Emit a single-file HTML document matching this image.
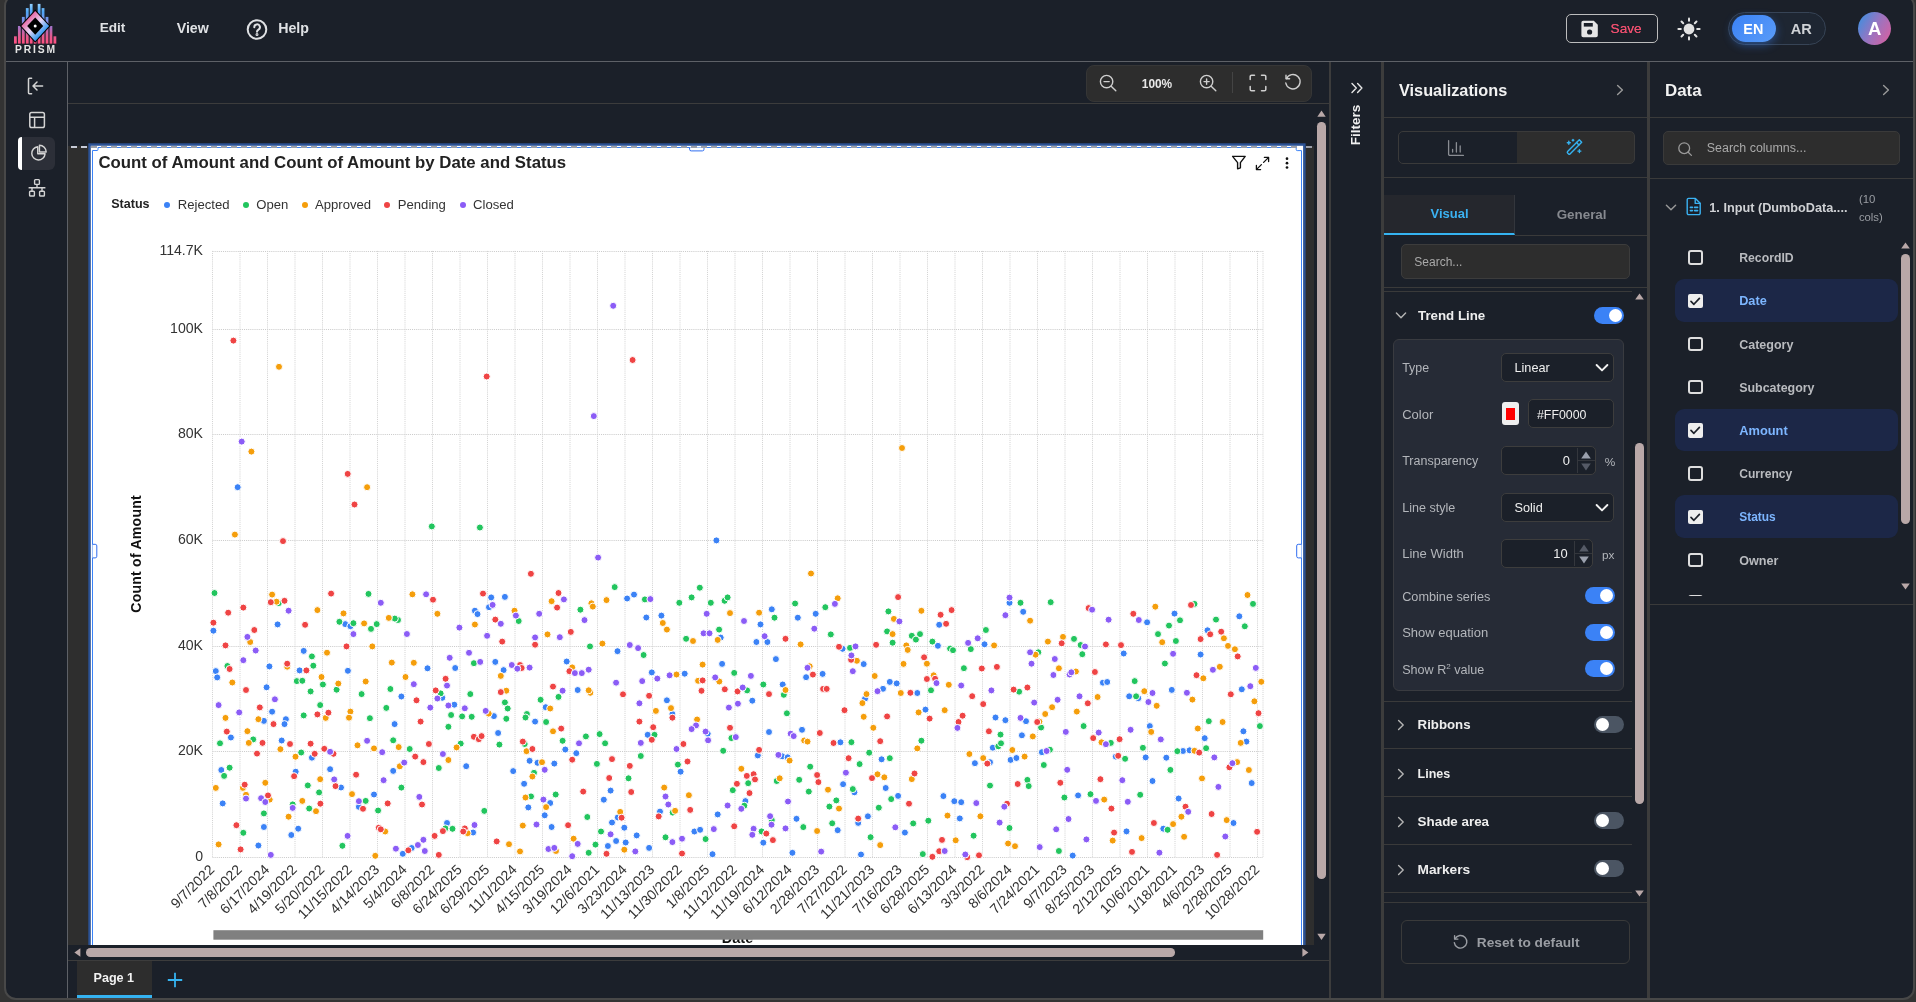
<!DOCTYPE html>
<html><head><meta charset="utf-8"><title>Prism</title>
<style>
html,body{margin:0;padding:0;overflow:hidden}
body{width:1916px;height:1002px;background:#333333;overflow:hidden;position:relative;font-family:"Liberation Sans",sans-serif;}
div{box-sizing:border-box}
svg{position:absolute;overflow:visible}
.tg{position:absolute;width:30px;height:17px;border-radius:9px}
.tg i{position:absolute;top:2px;width:13px;height:13px;border-radius:50%;background:#fff}
.on{background:#3b82f6} .on i{right:2px}
.off{background:#4b5563} .off i{left:2px}
.hl{position:absolute;height:1px;background:#3a3a3a}
.vl{position:absolute;width:3px;background:#3c3c3c}
.inp{position:absolute;background:#1b2029;border:1px solid #3d3d3d;border-radius:5px}
</style></head>
<body>
<div style="position:absolute;left:4px;top:-6px;width:1911px;height:1006px;border:2px solid #484848;border-radius:12px;background:#1b2029"></div>
<div style="position:absolute;left:0;top:0;width:1916px;height:1002px;overflow:hidden;will-change:transform">
<div style="position:absolute;left:6px;top:61px;width:1907px;height:1px;background:#5e6167"></div><svg style="left:0;top:0" width="70" height="60" viewBox="0 0 70 60">
<defs>
<linearGradient id="lgb" gradientUnits="userSpaceOnUse" x1="0" y1="3" x2="0" y2="44">
<stop offset="0" stop-color="#9ad4ff"/><stop offset="0.22" stop-color="#4ea6f6"/><stop offset="0.42" stop-color="#7b8fe6"/><stop offset="0.6" stop-color="#a871c2"/><stop offset="0.82" stop-color="#e65a8e"/><stop offset="1" stop-color="#ff4f7f"/>
</linearGradient>
<linearGradient id="lgd" gradientUnits="userSpaceOnUse" x1="28" y1="18.5" x2="42.5" y2="33">
<stop offset="0" stop-color="#e66aa6"/><stop offset="0.5" stop-color="#e6d6f6"/><stop offset="1" stop-color="#3a9bf2"/>
</linearGradient>
</defs>
<g fill="url(#lgb)"><rect x="14.00" y="36.3" width="2.8" height="7.3"/><rect x="17.95" y="26" width="2.8" height="17.6"/><rect x="21.90" y="16.9" width="2.8" height="26.7"/><rect x="25.85" y="8.1" width="2.8" height="35.5"/><rect x="29.80" y="3.9" width="2.8" height="39.7"/><rect x="33.75" y="14" width="2.8" height="29.6"/><rect x="37.70" y="3.9" width="2.8" height="39.7"/><rect x="41.65" y="8.1" width="2.8" height="35.5"/><rect x="45.60" y="16.9" width="2.8" height="26.7"/><rect x="49.55" y="26" width="2.8" height="17.6"/><rect x="53.50" y="36.3" width="2.8" height="7.3"/></g>
<path d="M35.2 9.50 L50.5 26.1 L35.2 42.70 L19.900000000000002 26.1 Z" fill="#000"/>
<path d="M35.2 11.02 L49.1 26.1 L35.2 41.18 L21.300000000000004 26.1 Z" fill="url(#lgd)"/>
<path d="M35.2 17.42 L43.2 26.1 L35.2 34.78 L27.200000000000003 26.1 Z" fill="#000"/>
<circle cx="35.2" cy="26.1" r="1.5" fill="#fff"/>
<text x="14.9" y="52.9" font-family="Liberation Sans" font-weight="bold" font-size="10.3" fill="#e4e4e4" textLength="40.3" lengthAdjust="spacing">PRISM</text>
</svg><div style="position:absolute;top:18.20px;line-height:20px;font-size:13.6px;color:#dfe1e4;white-space:nowrap;font-weight:bold;left:99.70px;">Edit</div><div style="position:absolute;top:18.20px;line-height:20px;font-size:14.2px;color:#dfe1e4;white-space:nowrap;font-weight:bold;left:176.70px;">View</div><svg style="left:245px;top:17.6px" width="24" height="24" viewBox="0 0 24 24" fill="none" stroke="#dfe1e4" stroke-width="2" stroke-linecap="round" stroke-linejoin="round">
<circle cx="12" cy="11.5" r="9.3"/><path d="M9.3 9.2a2.8 2.8 0 1 1 4.2 2.4c-.9.55-1.5 1.1-1.5 2.2"/><circle cx="12" cy="16.6" r="0.5" fill="#dfe1e4"/></svg><div style="position:absolute;top:18.20px;line-height:20px;font-size:14.2px;color:#dfe1e4;white-space:nowrap;font-weight:bold;left:278.20px;">Help</div><div style="position:absolute;left:1566px;top:14px;width:92px;height:29px;box-sizing:border-box;border:1px solid #bdbdbd;border-radius:5px;"></div><svg style="left:1581px;top:19.5px" width="18" height="18" viewBox="0 0 18 18"><path d="M2.2 0.8h10.6l4 4v10.6a1.8 1.8 0 0 1-1.8 1.8H2.2a1.8 1.8 0 0 1-1.8-1.8V2.6a1.8 1.8 0 0 1 1.8-1.8z" fill="#e6e6e6"/><rect x="2.8" y="3" width="9" height="3.6" fill="#1b2029"/><circle cx="8.6" cy="12" r="2.6" fill="#1b2029"/></svg><div style="position:absolute;top:18.50px;line-height:20px;font-size:13.6px;color:#ee4f6f;white-space:nowrap;left:1610.60px;text-shadow:0 0 0.4px #ee4f6f;">Save</div><svg style="left:1676.5px;top:16.5px" width="24" height="24" viewBox="0 0 24 24" stroke="#e2e2e2" stroke-width="2" stroke-linecap="round"><circle cx="12" cy="12" r="5.4" fill="#e2e2e2" stroke="none"/><line x1="20.20" y1="12.00" x2="22.60" y2="12.00"/><line x1="17.80" y1="17.80" x2="19.50" y2="19.50"/><line x1="12.00" y1="20.20" x2="12.00" y2="22.60"/><line x1="6.20" y1="17.80" x2="4.50" y2="19.50"/><line x1="3.80" y1="12.00" x2="1.40" y2="12.00"/><line x1="6.20" y1="6.20" x2="4.50" y2="4.50"/><line x1="12.00" y1="3.80" x2="12.00" y2="1.40"/><line x1="17.80" y1="6.20" x2="19.50" y2="4.50"/></svg><div style="position:absolute;left:1728px;top:12px;width:98px;height:33px;box-sizing:border-box;border:1px solid #374456;border-radius:17px;background:#1e2632;"></div><div style="position:absolute;left:1732px;top:15.3px;width:43.5px;height:26.4px;box-sizing:border-box;border-radius:14px;background:linear-gradient(135deg,#3b82f6,#5a9cf8);box-shadow:0 3px 10px rgba(59,130,246,0.45);"></div><div style="position:absolute;top:18.50px;line-height:20px;font-size:14.4px;color:#fff;white-space:nowrap;font-weight:bold;left:1603.30px;width:300px;text-align:center;">EN</div><div style="position:absolute;top:18.50px;line-height:20px;font-size:14.6px;color:#cfd2d6;white-space:nowrap;font-weight:bold;left:1651.20px;width:300px;text-align:center;">AR</div><div style="position:absolute;left:1858px;top:11.8px;width:33.4px;height:33.4px;box-sizing:border-box;border-radius:50%;background:linear-gradient(120deg,#3d8fe0 5%,#9a74c0 50%,#d860a0 95%);"></div><div style="position:absolute;top:18.60px;line-height:20px;font-size:18.5px;color:#fff;white-space:nowrap;font-weight:bold;left:1724.70px;width:300px;text-align:center;">A</div><div style="position:absolute;left:67px;top:62px;width:1px;height:936px;background:#5e6167"></div><svg style="left:26px;top:76px" width="20" height="20" viewBox="0 0 20 20" fill="none" stroke="#d4d4d4" stroke-width="1.5" stroke-linecap="round" stroke-linejoin="round">
<path d="M5.6 2.3H3.4a.9.9 0 0 0-.9.9v13.6a.9.9 0 0 0 .9.9h2.2"/><path d="M16.6 10H7.2M11 6l-4 4 4 4"/></svg><svg style="left:27px;top:109.8px" width="20" height="20" viewBox="0 0 20 20" fill="none" stroke="#d4d4d4" stroke-width="1.5" stroke-linejoin="round">
<rect x="2.8" y="2.5" width="14.6" height="15" rx="1.8"/><path d="M2.8 7.2h14.6M7.6 7.2v10.3"/></svg><div style="position:absolute;left:18px;top:136.5px;width:37px;height:33.5px;box-sizing:border-box;background:#2c2f38;border-radius:6px;"></div><div style="position:absolute;left:18px;top:136.5px;width:4px;height:33.5px;box-sizing:border-box;background:#fff;border-radius:4px 0 0 4px;"></div><svg style="left:28.8px;top:143px" width="19" height="19" viewBox="0 0 20 20" fill="none" stroke="#d4d4d4" stroke-width="1.5" stroke-linejoin="round" stroke-linecap="round">
<path d="M9.2 3.9A7 7 0 1 0 16.9 11.4H9.2z"/><path d="M11 2.4v7.1h7.1A7.1 7.1 0 0 0 11 2.4z"/></svg><svg style="left:26.7px;top:177.6px" width="20" height="20" viewBox="0 0 20 20" fill="none" stroke="#d4d4d4" stroke-width="1.4" stroke-linejoin="round">
<rect x="7.6" y="1.6" width="4.8" height="4.8" rx="0.8"/><rect x="2.6" y="13.2" width="4.8" height="4.8" rx="0.8"/><rect x="12.6" y="13.2" width="4.8" height="4.8" rx="0.8"/>
<path d="M10 6.4v3.4M1.6 9.8h16.8M5 9.8v3.4M15 9.8v3.4"/></svg><div style="position:absolute;left:68px;top:103px;width:1261px;height:1px;background:#3c3c3c"></div><div style="position:absolute;left:1086px;top:64.5px;width:225.6px;height:37.3px;box-sizing:border-box;background:#2d2d2d;border:1px solid #363636;border-radius:8px;"></div><svg style="left:1097.5px;top:73px" width="20" height="20" viewBox="0 0 20 20" fill="none" stroke="#cfcfcf" stroke-width="1.4" stroke-linecap="round"><circle cx="8.6" cy="8.6" r="6.2"/><path d="M13.2 13.2l4.6 4.6M6 8.6h5.2"/></svg><div style="position:absolute;top:73.80px;line-height:20px;font-size:11.9px;color:#e8e8e8;white-space:nowrap;font-weight:bold;left:1007.00px;width:300px;text-align:center;">100%</div><svg style="left:1197.7px;top:73px" width="20" height="20" viewBox="0 0 20 20" fill="none" stroke="#cfcfcf" stroke-width="1.4" stroke-linecap="round"><circle cx="8.6" cy="8.6" r="6.2"/><path d="M13.2 13.2l4.6 4.6M6 8.6h5.2M8.6 6v5.2"/></svg><div style="position:absolute;left:1232px;top:72px;width:1px;height:21px;box-sizing:border-box;background:#444;"></div><svg style="left:1247.7px;top:72.7px" width="20" height="20" viewBox="0 0 20 20" fill="none" stroke="#cfcfcf" stroke-width="1.5" stroke-linecap="round" stroke-linejoin="round"><path d="M2.2 6.5V3.6a1.4 1.4 0 0 1 1.4-1.4h2.9M13.5 2.2h2.9a1.4 1.4 0 0 1 1.4 1.4v2.9M17.8 13.5v2.9a1.4 1.4 0 0 1-1.4 1.4h-2.9M6.5 17.8H3.6a1.4 1.4 0 0 1-1.4-1.4v-2.9"/></svg><svg style="left:1282.5px;top:73px" width="20" height="20" viewBox="0 0 20 20" fill="none" stroke="#cfcfcf" stroke-width="1.4" stroke-linecap="round" stroke-linejoin="round"><path d="M3.4 5.6A7.2 7.2 0 1 1 2.8 10"/><path d="M3 2.2v3.6h3.6"/></svg><div style="position:absolute;left:68px;top:146px;width:1246px;height:799px;box-sizing:border-box;background:#2e2e2e;"></div><svg style="left:1317px;top:109.5px" width="9" height="8" viewBox="0 0 9 8"><path d="M0.3 6.8L4.5 0.6L8.7 6.8z" fill="#b9a8a8"/></svg><div style="position:absolute;left:1317.2px;top:122px;width:8.6px;height:757px;box-sizing:border-box;background:#b9a8a8;border-radius:4.3px;"></div><svg style="left:1317px;top:932.5px" width="9" height="8" viewBox="0 0 9 8"><path d="M0.3 0.8L4.5 7L8.7 0.8z" fill="#b9a8a8"/></svg><svg style="left:73.5px;top:948.3px" width="7" height="9" viewBox="0 0 7 9"><path d="M6.4 0.3L0.4 4.5L6.4 8.7z" fill="#b9a8a8"/></svg><div style="position:absolute;left:86px;top:948.2px;width:1089px;height:8.6px;box-sizing:border-box;background:#b9a8a8;border-radius:4.3px;"></div><svg style="left:1301.8px;top:948.3px" width="7" height="9" viewBox="0 0 7 9"><path d="M0.4 0.3L6.4 4.5L0.4 8.7z" fill="#b9a8a8"/></svg><div style="position:absolute;left:68px;top:960px;width:1261px;height:1px;background:#3c3c3c"></div><div style="position:absolute;left:77px;top:961px;width:75px;height:37px;box-sizing:border-box;background:#2d2d2d;border-bottom:3px solid #35b3f1;"></div><div style="position:absolute;top:968.00px;line-height:20px;font-size:12.6px;color:#f2f2f2;white-space:nowrap;font-weight:bold;left:-36.20px;width:300px;text-align:center;">Page 1</div><svg style="left:166.8px;top:971.8px" width="16" height="16" viewBox="0 0 16 16" stroke="#35b3f1" stroke-width="1.8" fill="none"><path d="M8 0.8v14.4M0.8 8h14.4"/></svg><div style="position:absolute;left:1329px;top:62px;width:2px;height:936px;background:#3c3c3c"></div><div class="vl" style="left:1381px;top:62px;height:936px"></div><svg style="left:1349.5px;top:81.5px" width="14" height="12" viewBox="0 0 14 12" fill="none" stroke="#e6e6e6" stroke-width="1.4" stroke-linecap="round" stroke-linejoin="round"><path d="M2 1.6l4.3 4.4L2 10.4M7.6 1.6l4.3 4.4-4.3 4.4"/></svg><div style="position:absolute;left:1356px;top:124.7px;width:0;height:0"><div style="position:absolute;left:-40px;top:-10px;width:80px;height:20px;line-height:20px;text-align:center;transform:rotate(-90deg);font-weight:bold;font-size:13.5px;color:#f0f0f0;white-space:nowrap">Filters</div></div><svg style="left:0;top:0;overflow:hidden" width="1330" height="945" viewBox="0 0 1330 945">
<rect x="88.3" y="143.3" width="1217.3" height="820" fill="#2b5295"/>
<rect x="90.8" y="145.8" width="1212.3" height="820" fill="#fff"/>
<g fill="none" stroke="#3b82f6" stroke-width="1">
<path d="M92.5 960V150.5h4.5q1 0 1-1V147.5H1296.2v2.1q0 1 1 1h4.3V960"/>
</g>
<g fill="#fff" stroke="#2f6df0" stroke-width="1">
<path d="M689.6 147.5v1.8q0 1.6 1.6 1.6h11.2q1.6 0 1.6-1.6v-1.8"/>
<path d="M92.5 544.3h2.7q1.6 0 1.6 1.6v10.4q0 1.6-1.6 1.6h-2.7"/>
<path d="M1301.5 544.3h-3.2q-1.6 0-1.6 1.6v10.4q0 1.6 1.6 1.6h3.2"/>
</g>
</svg><svg style="left:0;top:0" width="1916" height="160"><line x1="71" y1="147" x2="88.3" y2="147" stroke="#c6cad6" stroke-width="2" stroke-dasharray="6 4"/><line x1="91" y1="147" x2="1301" y2="147" stroke="#9b9fa9" stroke-width="2" stroke-dasharray="6 4" stroke-dashoffset="0"/><line x1="1306" y1="147" x2="1312" y2="147" stroke="#9b9fa9" stroke-width="2"/></svg><div style="position:absolute;top:153.30px;line-height:20px;font-size:16.8px;color:#222;white-space:nowrap;font-weight:bold;left:98.50px;">Count of Amount and Count of Amount by Date and Status</div><svg style="left:1230.5px;top:155px" width="16" height="15" viewBox="0 0 16 15" fill="none" stroke="#111" stroke-width="1.4" stroke-linejoin="round"><path d="M1.6 1.4h12.6L9.4 7.6v5.2l-2.8 1V7.6z"/></svg><svg style="left:1255px;top:156px" width="15" height="15" viewBox="0 0 15 15" fill="none" stroke="#111" stroke-width="1.3" stroke-linecap="round" stroke-linejoin="round"><path d="M9.4 1.4h4.2v4.2M13.4 1.6L8.6 6.4M5.6 13.6H1.4V9.4M1.6 13.4l4.8-4.8"/></svg><svg style="left:1285px;top:156px" width="4" height="14" viewBox="0 0 4 14" fill="#111"><circle cx="2" cy="2.7" r="1.35"/><circle cx="2" cy="7.2" r="1.35"/><circle cx="2" cy="11.5" r="1.35"/></svg><div style="position:absolute;top:193.60px;line-height:20px;font-size:12.55px;color:#222;white-space:nowrap;font-weight:bold;left:111.20px;">Status</div><div style="position:absolute;left:164.3px;top:202.2px;width:6px;height:6px;box-sizing:border-box;background:#3b82f6;border-radius:50%;"></div><div style="position:absolute;top:194.70px;line-height:20px;font-size:13.12px;color:#333;white-space:nowrap;left:177.80px;">Rejected</div><div style="position:absolute;left:242.8px;top:202.2px;width:6px;height:6px;box-sizing:border-box;background:#22c55e;border-radius:50%;"></div><div style="position:absolute;top:194.70px;line-height:20px;font-size:13.12px;color:#333;white-space:nowrap;left:256.30px;">Open</div><div style="position:absolute;left:301.5px;top:202.2px;width:6px;height:6px;box-sizing:border-box;background:#f59e0b;border-radius:50%;"></div><div style="position:absolute;top:194.70px;line-height:20px;font-size:13.12px;color:#333;white-space:nowrap;left:315.00px;">Approved</div><div style="position:absolute;left:384.3px;top:202.2px;width:6px;height:6px;box-sizing:border-box;background:#ef4444;border-radius:50%;"></div><div style="position:absolute;top:194.70px;line-height:20px;font-size:13.12px;color:#333;white-space:nowrap;left:397.80px;">Pending</div><div style="position:absolute;left:459.5px;top:202.2px;width:6px;height:6px;box-sizing:border-box;background:#8b5cf6;border-radius:50%;"></div><div style="position:absolute;top:194.70px;line-height:20px;font-size:13.12px;color:#333;white-space:nowrap;left:473.00px;">Closed</div><svg style="left:0;top:0;overflow:hidden" width="1330" height="945" viewBox="0 0 1330 945" font-family="Liberation Sans" font-size="14.1" fill="#333">
<g stroke="#cbcbcb" stroke-width="1" stroke-dasharray="1.05 1.05" fill="none"><line x1="212.5" y1="857.5" x2="1263" y2="857.5"/><line x1="212.5" y1="751.5" x2="1263" y2="751.5"/><line x1="212.5" y1="646.5" x2="1263" y2="646.5"/><line x1="212.5" y1="540.5" x2="1263" y2="540.5"/><line x1="212.5" y1="434.5" x2="1263" y2="434.5"/><line x1="212.5" y1="329.5" x2="1263" y2="329.5"/><line x1="212.5" y1="251.5" x2="1263" y2="251.5"/><line x1="212.5" y1="250.9" x2="212.5" y2="857.2" stroke="#d3d3d3"/><line x1="240.0" y1="250.9" x2="240.0" y2="857.2" stroke="#d3d3d3"/><line x1="267.5" y1="250.9" x2="267.5" y2="857.2" stroke="#d3d3d3"/><line x1="295.0" y1="250.9" x2="295.0" y2="857.2" stroke="#d3d3d3"/><line x1="322.5" y1="250.9" x2="322.5" y2="857.2" stroke="#d3d3d3"/><line x1="350.0" y1="250.9" x2="350.0" y2="857.2" stroke="#d3d3d3"/><line x1="377.5" y1="250.9" x2="377.5" y2="857.2" stroke="#d3d3d3"/><line x1="405.0" y1="250.9" x2="405.0" y2="857.2" stroke="#d3d3d3"/><line x1="432.5" y1="250.9" x2="432.5" y2="857.2" stroke="#d3d3d3"/><line x1="460.0" y1="250.9" x2="460.0" y2="857.2" stroke="#d3d3d3"/><line x1="487.5" y1="250.9" x2="487.5" y2="857.2" stroke="#d3d3d3"/><line x1="515.0" y1="250.9" x2="515.0" y2="857.2" stroke="#d3d3d3"/><line x1="542.5" y1="250.9" x2="542.5" y2="857.2" stroke="#d3d3d3"/><line x1="570.0" y1="250.9" x2="570.0" y2="857.2" stroke="#d3d3d3"/><line x1="597.5" y1="250.9" x2="597.5" y2="857.2" stroke="#d3d3d3"/><line x1="625.0" y1="250.9" x2="625.0" y2="857.2" stroke="#d3d3d3"/><line x1="652.5" y1="250.9" x2="652.5" y2="857.2" stroke="#d3d3d3"/><line x1="680.0" y1="250.9" x2="680.0" y2="857.2" stroke="#d3d3d3"/><line x1="707.5" y1="250.9" x2="707.5" y2="857.2" stroke="#d3d3d3"/><line x1="735.0" y1="250.9" x2="735.0" y2="857.2" stroke="#d3d3d3"/><line x1="762.5" y1="250.9" x2="762.5" y2="857.2" stroke="#d3d3d3"/><line x1="790.0" y1="250.9" x2="790.0" y2="857.2" stroke="#d3d3d3"/><line x1="817.5" y1="250.9" x2="817.5" y2="857.2" stroke="#d3d3d3"/><line x1="845.0" y1="250.9" x2="845.0" y2="857.2" stroke="#d3d3d3"/><line x1="872.5" y1="250.9" x2="872.5" y2="857.2" stroke="#d3d3d3"/><line x1="900.0" y1="250.9" x2="900.0" y2="857.2" stroke="#d3d3d3"/><line x1="927.5" y1="250.9" x2="927.5" y2="857.2" stroke="#d3d3d3"/><line x1="955.0" y1="250.9" x2="955.0" y2="857.2" stroke="#d3d3d3"/><line x1="982.5" y1="250.9" x2="982.5" y2="857.2" stroke="#d3d3d3"/><line x1="1010.0" y1="250.9" x2="1010.0" y2="857.2" stroke="#d3d3d3"/><line x1="1037.5" y1="250.9" x2="1037.5" y2="857.2" stroke="#d3d3d3"/><line x1="1065.0" y1="250.9" x2="1065.0" y2="857.2" stroke="#d3d3d3"/><line x1="1092.5" y1="250.9" x2="1092.5" y2="857.2" stroke="#d3d3d3"/><line x1="1120.0" y1="250.9" x2="1120.0" y2="857.2" stroke="#d3d3d3"/><line x1="1147.5" y1="250.9" x2="1147.5" y2="857.2" stroke="#d3d3d3"/><line x1="1175.0" y1="250.9" x2="1175.0" y2="857.2" stroke="#d3d3d3"/><line x1="1202.5" y1="250.9" x2="1202.5" y2="857.2" stroke="#d3d3d3"/><line x1="1230.0" y1="250.9" x2="1230.0" y2="857.2" stroke="#d3d3d3"/><line x1="1257.5" y1="250.9" x2="1257.5" y2="857.2" stroke="#d3d3d3"/><line x1="1263" y1="250.9" x2="1263" y2="857.2" stroke="#d3d3d3"/></g>
<g><text x="203" y="861.1" text-anchor="end">0</text><text x="203" y="755.1" text-anchor="end">20K</text><text x="203" y="650.1" text-anchor="end">40K</text><text x="203" y="544.1" text-anchor="end">60K</text><text x="203" y="438.1" text-anchor="end">80K</text><text x="203" y="333.1" text-anchor="end">100K</text><text x="203" y="255.1" text-anchor="end">114.7K</text></g><g><text transform="translate(211.6,866.9) rotate(-45)" text-anchor="end" dy="0.36em">9/7/2022</text><text transform="translate(239.1,866.9) rotate(-45)" text-anchor="end" dy="0.36em">7/8/2022</text><text transform="translate(266.6,866.9) rotate(-45)" text-anchor="end" dy="0.36em">6/17/2024</text><text transform="translate(294.1,866.9) rotate(-45)" text-anchor="end" dy="0.36em">4/19/2022</text><text transform="translate(321.6,866.9) rotate(-45)" text-anchor="end" dy="0.36em">5/20/2022</text><text transform="translate(349.1,866.9) rotate(-45)" text-anchor="end" dy="0.36em">11/15/2022</text><text transform="translate(376.6,866.9) rotate(-45)" text-anchor="end" dy="0.36em">4/14/2023</text><text transform="translate(404.1,866.9) rotate(-45)" text-anchor="end" dy="0.36em">5/4/2024</text><text transform="translate(431.6,866.9) rotate(-45)" text-anchor="end" dy="0.36em">6/8/2022</text><text transform="translate(459.1,866.9) rotate(-45)" text-anchor="end" dy="0.36em">6/24/2025</text><text transform="translate(486.6,866.9) rotate(-45)" text-anchor="end" dy="0.36em">6/29/2025</text><text transform="translate(514.1,866.9) rotate(-45)" text-anchor="end" dy="0.36em">11/1/2024</text><text transform="translate(541.6,866.9) rotate(-45)" text-anchor="end" dy="0.36em">4/15/2025</text><text transform="translate(569.1,866.9) rotate(-45)" text-anchor="end" dy="0.36em">3/19/2024</text><text transform="translate(596.6,866.9) rotate(-45)" text-anchor="end" dy="0.36em">12/6/2021</text><text transform="translate(624.1,866.9) rotate(-45)" text-anchor="end" dy="0.36em">3/23/2024</text><text transform="translate(651.6,866.9) rotate(-45)" text-anchor="end" dy="0.36em">11/13/2023</text><text transform="translate(679.1,866.9) rotate(-45)" text-anchor="end" dy="0.36em">11/30/2022</text><text transform="translate(706.6,866.9) rotate(-45)" text-anchor="end" dy="0.36em">1/8/2025</text><text transform="translate(734.1,866.9) rotate(-45)" text-anchor="end" dy="0.36em">11/12/2022</text><text transform="translate(761.6,866.9) rotate(-45)" text-anchor="end" dy="0.36em">11/19/2024</text><text transform="translate(789.1,866.9) rotate(-45)" text-anchor="end" dy="0.36em">6/12/2024</text><text transform="translate(816.6,866.9) rotate(-45)" text-anchor="end" dy="0.36em">2/28/2023</text><text transform="translate(844.1,866.9) rotate(-45)" text-anchor="end" dy="0.36em">7/27/2022</text><text transform="translate(871.6,866.9) rotate(-45)" text-anchor="end" dy="0.36em">11/21/2023</text><text transform="translate(899.1,866.9) rotate(-45)" text-anchor="end" dy="0.36em">7/16/2023</text><text transform="translate(926.6,866.9) rotate(-45)" text-anchor="end" dy="0.36em">6/28/2025</text><text transform="translate(954.1,866.9) rotate(-45)" text-anchor="end" dy="0.36em">6/13/2024</text><text transform="translate(981.6,866.9) rotate(-45)" text-anchor="end" dy="0.36em">3/3/2022</text><text transform="translate(1009.1,866.9) rotate(-45)" text-anchor="end" dy="0.36em">8/6/2024</text><text transform="translate(1036.6,866.9) rotate(-45)" text-anchor="end" dy="0.36em">7/24/2021</text><text transform="translate(1064.1,866.9) rotate(-45)" text-anchor="end" dy="0.36em">9/7/2023</text><text transform="translate(1091.6,866.9) rotate(-45)" text-anchor="end" dy="0.36em">8/25/2023</text><text transform="translate(1119.1,866.9) rotate(-45)" text-anchor="end" dy="0.36em">2/12/2025</text><text transform="translate(1146.6,866.9) rotate(-45)" text-anchor="end" dy="0.36em">10/6/2021</text><text transform="translate(1174.1,866.9) rotate(-45)" text-anchor="end" dy="0.36em">1/18/2021</text><text transform="translate(1201.6,866.9) rotate(-45)" text-anchor="end" dy="0.36em">4/6/2023</text><text transform="translate(1229.1,866.9) rotate(-45)" text-anchor="end" dy="0.36em">2/28/2025</text><text transform="translate(1256.6,866.9) rotate(-45)" text-anchor="end" dy="0.36em">10/28/2022</text></g>
<g stroke="#fff" stroke-width="1"><circle cx="474.9" cy="610.7" r="3.5" fill="#3b82f6"/><circle cx="213.4" cy="630.7" r="3.5" fill="#3b82f6"/><circle cx="277.6" cy="624.4" r="3.5" fill="#3b82f6"/><circle cx="345.2" cy="624.1" r="3.5" fill="#3b82f6"/><circle cx="350.4" cy="626.2" r="3.5" fill="#3b82f6"/><circle cx="303.7" cy="650.9" r="3.5" fill="#3b82f6"/><circle cx="269.4" cy="666.4" r="3.5" fill="#3b82f6"/><circle cx="215.8" cy="671.1" r="3.5" fill="#3b82f6"/><circle cx="299.6" cy="670.4" r="3.5" fill="#3b82f6"/><circle cx="347.9" cy="670.8" r="3.5" fill="#3b82f6"/><circle cx="427.5" cy="668.3" r="3.5" fill="#3b82f6"/><circle cx="455.2" cy="668.0" r="3.5" fill="#3b82f6"/><circle cx="217.2" cy="677.4" r="3.5" fill="#3b82f6"/><circle cx="266.6" cy="687.3" r="3.5" fill="#3b82f6"/><circle cx="401.4" cy="696.5" r="3.5" fill="#3b82f6"/><circle cx="442.3" cy="697.8" r="3.5" fill="#3b82f6"/><circle cx="454.3" cy="704.7" r="3.5" fill="#3b82f6"/><circle cx="272.1" cy="711.7" r="3.5" fill="#3b82f6"/><circle cx="263.9" cy="720.9" r="3.5" fill="#3b82f6"/><circle cx="285.9" cy="719.2" r="3.5" fill="#3b82f6"/><circle cx="284.5" cy="724.1" r="3.5" fill="#3b82f6"/><circle cx="394.6" cy="724.1" r="3.5" fill="#3b82f6"/><circle cx="230.9" cy="737.5" r="3.5" fill="#3b82f6"/><circle cx="281.7" cy="740.5" r="3.5" fill="#3b82f6"/><circle cx="311.9" cy="757.7" r="3.5" fill="#3b82f6"/><circle cx="466.2" cy="766.2" r="3.5" fill="#3b82f6"/><circle cx="393.2" cy="770.9" r="3.5" fill="#3b82f6"/><circle cx="221.3" cy="770.0" r="3.5" fill="#3b82f6"/><circle cx="295.7" cy="771.7" r="3.5" fill="#3b82f6"/><circle cx="330.1" cy="769.2" r="3.5" fill="#3b82f6"/><circle cx="341.0" cy="787.5" r="3.5" fill="#3b82f6"/><circle cx="374.0" cy="794.5" r="3.5" fill="#3b82f6"/><circle cx="222.7" cy="803.4" r="3.5" fill="#3b82f6"/><circle cx="358.9" cy="806.8" r="3.5" fill="#3b82f6"/><circle cx="263.9" cy="827.0" r="3.5" fill="#3b82f6"/><circle cx="298.2" cy="828.7" r="3.5" fill="#3b82f6"/><circle cx="291.3" cy="835.0" r="3.5" fill="#3b82f6"/><circle cx="447.0" cy="823.0" r="3.5" fill="#3b82f6"/><circle cx="473.1" cy="832.5" r="3.5" fill="#3b82f6"/><circle cx="411.7" cy="848.0" r="3.5" fill="#3b82f6"/><circle cx="402.8" cy="853.8" r="3.5" fill="#3b82f6"/><circle cx="258.4" cy="845.5" r="3.5" fill="#3b82f6"/><circle cx="491.2" cy="597.4" r="3.5" fill="#3b82f6"/><circle cx="504.9" cy="596.9" r="3.5" fill="#3b82f6"/><circle cx="489.0" cy="607.2" r="3.5" fill="#3b82f6"/><circle cx="477.5" cy="614.1" r="3.5" fill="#3b82f6"/><circle cx="627.1" cy="598.5" r="3.5" fill="#3b82f6"/><circle cx="634.0" cy="594.6" r="3.5" fill="#3b82f6"/><circle cx="646.3" cy="617.5" r="3.5" fill="#3b82f6"/><circle cx="661.4" cy="615.6" r="3.5" fill="#3b82f6"/><circle cx="720.7" cy="637.6" r="3.5" fill="#3b82f6"/><circle cx="617.5" cy="651.2" r="3.5" fill="#3b82f6"/><circle cx="495.3" cy="661.9" r="3.5" fill="#3b82f6"/><circle cx="503.6" cy="670.1" r="3.5" fill="#3b82f6"/><circle cx="566.7" cy="661.5" r="3.5" fill="#3b82f6"/><circle cx="722.1" cy="663.9" r="3.5" fill="#3b82f6"/><circle cx="651.8" cy="672.4" r="3.5" fill="#3b82f6"/><circle cx="684.7" cy="673.7" r="3.5" fill="#3b82f6"/><circle cx="577.7" cy="690.0" r="3.5" fill="#3b82f6"/><circle cx="666.9" cy="700.3" r="3.5" fill="#3b82f6"/><circle cx="545.7" cy="707.2" r="3.5" fill="#3b82f6"/><circle cx="493.9" cy="716.1" r="3.5" fill="#3b82f6"/><circle cx="535.1" cy="721.6" r="3.5" fill="#3b82f6"/><circle cx="672.4" cy="714.0" r="3.5" fill="#3b82f6"/><circle cx="498.1" cy="733.0" r="3.5" fill="#3b82f6"/><circle cx="565.3" cy="749.5" r="3.5" fill="#3b82f6"/><circle cx="576.3" cy="753.2" r="3.5" fill="#3b82f6"/><circle cx="647.7" cy="734.8" r="3.5" fill="#3b82f6"/><circle cx="707.7" cy="733.7" r="3.5" fill="#3b82f6"/><circle cx="529.6" cy="760.8" r="3.5" fill="#3b82f6"/><circle cx="537.5" cy="762.8" r="3.5" fill="#3b82f6"/><circle cx="554.3" cy="763.6" r="3.5" fill="#3b82f6"/><circle cx="513.2" cy="771.1" r="3.5" fill="#3b82f6"/><circle cx="524.1" cy="783.8" r="3.5" fill="#3b82f6"/><circle cx="680.6" cy="771.7" r="3.5" fill="#3b82f6"/><circle cx="610.6" cy="790.6" r="3.5" fill="#3b82f6"/><circle cx="603.8" cy="799.7" r="3.5" fill="#3b82f6"/><circle cx="550.2" cy="803.0" r="3.5" fill="#3b82f6"/><circle cx="528.3" cy="807.4" r="3.5" fill="#3b82f6"/><circle cx="544.7" cy="815.3" r="3.5" fill="#3b82f6"/><circle cx="617.8" cy="817.4" r="3.5" fill="#3b82f6"/><circle cx="612.0" cy="822.5" r="3.5" fill="#3b82f6"/><circle cx="624.3" cy="827.7" r="3.5" fill="#3b82f6"/><circle cx="660.0" cy="811.6" r="3.5" fill="#3b82f6"/><circle cx="717.7" cy="814.4" r="3.5" fill="#3b82f6"/><circle cx="551.6" cy="827.0" r="3.5" fill="#3b82f6"/><circle cx="636.7" cy="835.4" r="3.5" fill="#3b82f6"/><circle cx="616.1" cy="841.0" r="3.5" fill="#3b82f6"/><circle cx="625.7" cy="842.5" r="3.5" fill="#3b82f6"/><circle cx="607.9" cy="846.0" r="3.5" fill="#3b82f6"/><circle cx="694.4" cy="831.5" r="3.5" fill="#3b82f6"/><circle cx="700.1" cy="829.8" r="3.5" fill="#3b82f6"/><circle cx="649.1" cy="847.9" r="3.5" fill="#3b82f6"/><circle cx="712.5" cy="854.2" r="3.5" fill="#3b82f6"/><circle cx="771.8" cy="609.3" r="3.5" fill="#3b82f6"/><circle cx="797.8" cy="617.7" r="3.5" fill="#3b82f6"/><circle cx="815.7" cy="613.8" r="3.5" fill="#3b82f6"/><circle cx="760.5" cy="624.4" r="3.5" fill="#3b82f6"/><circle cx="939.2" cy="624.8" r="3.5" fill="#3b82f6"/><circle cx="937.9" cy="645.8" r="3.5" fill="#3b82f6"/><circle cx="984.5" cy="644.3" r="3.5" fill="#3b82f6"/><circle cx="756.4" cy="642.0" r="3.5" fill="#3b82f6"/><circle cx="767.4" cy="642.0" r="3.5" fill="#3b82f6"/><circle cx="842.6" cy="648.8" r="3.5" fill="#3b82f6"/><circle cx="863.7" cy="664.1" r="3.5" fill="#3b82f6"/><circle cx="775.9" cy="659.1" r="3.5" fill="#3b82f6"/><circle cx="806.1" cy="677.2" r="3.5" fill="#3b82f6"/><circle cx="822.6" cy="673.9" r="3.5" fill="#3b82f6"/><circle cx="782.7" cy="684.5" r="3.5" fill="#3b82f6"/><circle cx="752.3" cy="700.7" r="3.5" fill="#3b82f6"/><circle cx="889.8" cy="681.9" r="3.5" fill="#3b82f6"/><circle cx="896.7" cy="683.4" r="3.5" fill="#3b82f6"/><circle cx="883.0" cy="688.8" r="3.5" fill="#3b82f6"/><circle cx="865.1" cy="698.5" r="3.5" fill="#3b82f6"/><circle cx="917.3" cy="693.0" r="3.5" fill="#3b82f6"/><circle cx="925.5" cy="709.6" r="3.5" fill="#3b82f6"/><circle cx="995.5" cy="717.5" r="3.5" fill="#3b82f6"/><circle cx="769.0" cy="732.0" r="3.5" fill="#3b82f6"/><circle cx="802.0" cy="729.8" r="3.5" fill="#3b82f6"/><circle cx="840.4" cy="742.3" r="3.5" fill="#3b82f6"/><circle cx="992.8" cy="747.7" r="3.5" fill="#3b82f6"/><circle cx="757.8" cy="755.4" r="3.5" fill="#3b82f6"/><circle cx="782.2" cy="756.3" r="3.5" fill="#3b82f6"/><circle cx="787.7" cy="757.3" r="3.5" fill="#3b82f6"/><circle cx="881.6" cy="759.3" r="3.5" fill="#3b82f6"/><circle cx="974.9" cy="763.2" r="3.5" fill="#3b82f6"/><circle cx="990.0" cy="762.2" r="3.5" fill="#3b82f6"/><circle cx="843.1" cy="784.2" r="3.5" fill="#3b82f6"/><circle cx="854.4" cy="792.3" r="3.5" fill="#3b82f6"/><circle cx="885.7" cy="788.0" r="3.5" fill="#3b82f6"/><circle cx="898.1" cy="795.9" r="3.5" fill="#3b82f6"/><circle cx="943.4" cy="796.1" r="3.5" fill="#3b82f6"/><circle cx="954.3" cy="801.2" r="3.5" fill="#3b82f6"/><circle cx="961.2" cy="802.2" r="3.5" fill="#3b82f6"/><circle cx="745.4" cy="801.1" r="3.5" fill="#3b82f6"/><circle cx="796.5" cy="818.8" r="3.5" fill="#3b82f6"/><circle cx="763.3" cy="842.7" r="3.5" fill="#3b82f6"/><circle cx="837.7" cy="830.2" r="3.5" fill="#3b82f6"/><circle cx="858.2" cy="822.9" r="3.5" fill="#3b82f6"/><circle cx="867.9" cy="816.3" r="3.5" fill="#3b82f6"/><circle cx="904.9" cy="832.6" r="3.5" fill="#3b82f6"/><circle cx="959.8" cy="818.4" r="3.5" fill="#3b82f6"/><circle cx="792.4" cy="852.8" r="3.5" fill="#3b82f6"/><circle cx="861.0" cy="854.5" r="3.5" fill="#3b82f6"/><circle cx="1009.5" cy="602.8" r="3.5" fill="#3b82f6"/><circle cx="1023.2" cy="611.8" r="3.5" fill="#3b82f6"/><circle cx="1147.1" cy="622.3" r="3.5" fill="#3b82f6"/><circle cx="1174.5" cy="613.6" r="3.5" fill="#3b82f6"/><circle cx="1239.3" cy="616.3" r="3.5" fill="#3b82f6"/><circle cx="1207.5" cy="630.3" r="3.5" fill="#3b82f6"/><circle cx="1123.7" cy="653.5" r="3.5" fill="#3b82f6"/><circle cx="1200.6" cy="654.5" r="3.5" fill="#3b82f6"/><circle cx="1102.9" cy="682.7" r="3.5" fill="#3b82f6"/><circle cx="1107.2" cy="682.0" r="3.5" fill="#3b82f6"/><circle cx="1129.2" cy="696.3" r="3.5" fill="#3b82f6"/><circle cx="1138.3" cy="698.2" r="3.5" fill="#3b82f6"/><circle cx="1171.8" cy="689.9" r="3.5" fill="#3b82f6"/><circle cx="1241.8" cy="689.3" r="3.5" fill="#3b82f6"/><circle cx="1005.4" cy="720.2" r="3.5" fill="#3b82f6"/><circle cx="1026.0" cy="721.2" r="3.5" fill="#3b82f6"/><circle cx="1021.9" cy="735.3" r="3.5" fill="#3b82f6"/><circle cx="1149.8" cy="726.1" r="3.5" fill="#3b82f6"/><circle cx="1204.7" cy="738.2" r="3.5" fill="#3b82f6"/><circle cx="1243.4" cy="731.3" r="3.5" fill="#3b82f6"/><circle cx="1246.4" cy="741.6" r="3.5" fill="#3b82f6"/><circle cx="1041.9" cy="752.2" r="3.5" fill="#3b82f6"/><circle cx="1183.0" cy="751.0" r="3.5" fill="#3b82f6"/><circle cx="1189.6" cy="750.3" r="3.5" fill="#3b82f6"/><circle cx="1010.6" cy="759.9" r="3.5" fill="#3b82f6"/><circle cx="1016.4" cy="758.0" r="3.5" fill="#3b82f6"/><circle cx="1115.8" cy="756.6" r="3.5" fill="#3b82f6"/><circle cx="1145.7" cy="757.4" r="3.5" fill="#3b82f6"/><circle cx="1166.3" cy="757.7" r="3.5" fill="#3b82f6"/><circle cx="1251.7" cy="783.1" r="3.5" fill="#3b82f6"/><circle cx="1152.5" cy="781.0" r="3.5" fill="#3b82f6"/><circle cx="1078.1" cy="795.4" r="3.5" fill="#3b82f6"/><circle cx="1178.6" cy="798.5" r="3.5" fill="#3b82f6"/><circle cx="1233.5" cy="823.0" r="3.5" fill="#3b82f6"/><circle cx="1163.3" cy="828.7" r="3.5" fill="#3b82f6"/><circle cx="1126.5" cy="831.4" r="3.5" fill="#3b82f6"/><circle cx="1072.7" cy="855.6" r="3.5" fill="#3b82f6"/><circle cx="237.7" cy="487.2" r="3.5" fill="#3b82f6"/><circle cx="716.4" cy="540.4" r="3.5" fill="#3b82f6"/><circle cx="214.5" cy="593.0" r="3.5" fill="#22c55e"/><circle cx="278.8" cy="603.1" r="3.5" fill="#22c55e"/><circle cx="368.5" cy="593.9" r="3.5" fill="#22c55e"/><circle cx="339.4" cy="621.8" r="3.5" fill="#22c55e"/><circle cx="353.4" cy="623.2" r="3.5" fill="#22c55e"/><circle cx="376.7" cy="624.1" r="3.5" fill="#22c55e"/><circle cx="371.0" cy="628.9" r="3.5" fill="#22c55e"/><circle cx="398.0" cy="620.0" r="3.5" fill="#22c55e"/><circle cx="394.8" cy="618.6" r="3.5" fill="#22c55e"/><circle cx="311.9" cy="656.4" r="3.5" fill="#22c55e"/><circle cx="473.9" cy="663.2" r="3.5" fill="#22c55e"/><circle cx="313.3" cy="665.7" r="3.5" fill="#22c55e"/><circle cx="227.4" cy="666.0" r="3.5" fill="#22c55e"/><circle cx="296.8" cy="681.1" r="3.5" fill="#22c55e"/><circle cx="302.3" cy="680.8" r="3.5" fill="#22c55e"/><circle cx="322.9" cy="684.5" r="3.5" fill="#22c55e"/><circle cx="310.6" cy="691.4" r="3.5" fill="#22c55e"/><circle cx="336.6" cy="689.7" r="3.5" fill="#22c55e"/><circle cx="390.4" cy="689.0" r="3.5" fill="#22c55e"/><circle cx="440.6" cy="693.4" r="3.5" fill="#22c55e"/><circle cx="361.6" cy="694.1" r="3.5" fill="#22c55e"/><circle cx="470.3" cy="694.1" r="3.5" fill="#22c55e"/><circle cx="320.2" cy="705.1" r="3.5" fill="#22c55e"/><circle cx="386.3" cy="707.9" r="3.5" fill="#22c55e"/><circle cx="303.7" cy="715.4" r="3.5" fill="#22c55e"/><circle cx="451.1" cy="715.0" r="3.5" fill="#22c55e"/><circle cx="462.1" cy="716.4" r="3.5" fill="#22c55e"/><circle cx="471.7" cy="716.8" r="3.5" fill="#22c55e"/><circle cx="369.9" cy="718.2" r="3.5" fill="#22c55e"/><circle cx="220.0" cy="743.3" r="3.5" fill="#22c55e"/><circle cx="253.2" cy="739.4" r="3.5" fill="#22c55e"/><circle cx="301.2" cy="752.5" r="3.5" fill="#22c55e"/><circle cx="393.2" cy="740.3" r="3.5" fill="#22c55e"/><circle cx="409.7" cy="749.0" r="3.5" fill="#22c55e"/><circle cx="448.4" cy="726.8" r="3.5" fill="#22c55e"/><circle cx="460.7" cy="743.6" r="3.5" fill="#22c55e"/><circle cx="438.8" cy="768.0" r="3.5" fill="#22c55e"/><circle cx="229.6" cy="767.7" r="3.5" fill="#22c55e"/><circle cx="224.1" cy="775.9" r="3.5" fill="#22c55e"/><circle cx="307.8" cy="785.4" r="3.5" fill="#22c55e"/><circle cx="401.4" cy="787.6" r="3.5" fill="#22c55e"/><circle cx="319.1" cy="792.4" r="3.5" fill="#22c55e"/><circle cx="365.7" cy="800.9" r="3.5" fill="#22c55e"/><circle cx="292.7" cy="804.4" r="3.5" fill="#22c55e"/><circle cx="309.2" cy="808.5" r="3.5" fill="#22c55e"/><circle cx="378.1" cy="810.5" r="3.5" fill="#22c55e"/><circle cx="263.9" cy="813.4" r="3.5" fill="#22c55e"/><circle cx="243.3" cy="832.8" r="3.5" fill="#22c55e"/><circle cx="445.4" cy="828.4" r="3.5" fill="#22c55e"/><circle cx="452.5" cy="828.8" r="3.5" fill="#22c55e"/><circle cx="342.4" cy="845.8" r="3.5" fill="#22c55e"/><circle cx="614.7" cy="587.1" r="3.5" fill="#22c55e"/><circle cx="699.8" cy="587.7" r="3.5" fill="#22c55e"/><circle cx="518.7" cy="621.0" r="3.5" fill="#22c55e"/><circle cx="580.4" cy="609.7" r="3.5" fill="#22c55e"/><circle cx="644.9" cy="599.4" r="3.5" fill="#22c55e"/><circle cx="679.3" cy="602.8" r="3.5" fill="#22c55e"/><circle cx="691.6" cy="597.4" r="3.5" fill="#22c55e"/><circle cx="710.8" cy="602.8" r="3.5" fill="#22c55e"/><circle cx="724.6" cy="600.8" r="3.5" fill="#22c55e"/><circle cx="727.6" cy="597.4" r="3.5" fill="#22c55e"/><circle cx="719.1" cy="629.6" r="3.5" fill="#22c55e"/><circle cx="686.1" cy="638.8" r="3.5" fill="#22c55e"/><circle cx="590.0" cy="646.4" r="3.5" fill="#22c55e"/><circle cx="643.6" cy="655.0" r="3.5" fill="#22c55e"/><circle cx="734.2" cy="672.9" r="3.5" fill="#22c55e"/><circle cx="558.5" cy="696.9" r="3.5" fill="#22c55e"/><circle cx="540.6" cy="699.8" r="3.5" fill="#22c55e"/><circle cx="504.9" cy="702.4" r="3.5" fill="#22c55e"/><circle cx="507.7" cy="708.5" r="3.5" fill="#22c55e"/><circle cx="506.3" cy="718.8" r="3.5" fill="#22c55e"/><circle cx="526.9" cy="714.0" r="3.5" fill="#22c55e"/><circle cx="525.5" cy="717.5" r="3.5" fill="#22c55e"/><circle cx="546.1" cy="722.0" r="3.5" fill="#22c55e"/><circle cx="499.4" cy="744.6" r="3.5" fill="#22c55e"/><circle cx="562.6" cy="740.8" r="3.5" fill="#22c55e"/><circle cx="524.7" cy="744.0" r="3.5" fill="#22c55e"/><circle cx="585.9" cy="736.4" r="3.5" fill="#22c55e"/><circle cx="599.6" cy="734.1" r="3.5" fill="#22c55e"/><circle cx="605.1" cy="743.3" r="3.5" fill="#22c55e"/><circle cx="654.5" cy="734.8" r="3.5" fill="#22c55e"/><circle cx="640.8" cy="756.0" r="3.5" fill="#22c55e"/><circle cx="731.4" cy="738.1" r="3.5" fill="#22c55e"/><circle cx="723.2" cy="750.8" r="3.5" fill="#22c55e"/><circle cx="534.0" cy="772.8" r="3.5" fill="#22c55e"/><circle cx="596.9" cy="763.9" r="3.5" fill="#22c55e"/><circle cx="628.5" cy="778.3" r="3.5" fill="#22c55e"/><circle cx="677.9" cy="764.6" r="3.5" fill="#22c55e"/><circle cx="732.8" cy="790.2" r="3.5" fill="#22c55e"/><circle cx="531.0" cy="796.4" r="3.5" fill="#22c55e"/><circle cx="555.7" cy="794.5" r="3.5" fill="#22c55e"/><circle cx="484.3" cy="810.9" r="3.5" fill="#22c55e"/><circle cx="587.3" cy="817.0" r="3.5" fill="#22c55e"/><circle cx="672.7" cy="812.6" r="3.5" fill="#22c55e"/><circle cx="601.0" cy="831.5" r="3.5" fill="#22c55e"/><circle cx="595.5" cy="844.6" r="3.5" fill="#22c55e"/><circle cx="665.5" cy="837.3" r="3.5" fill="#22c55e"/><circle cx="705.6" cy="839.1" r="3.5" fill="#22c55e"/><circle cx="588.7" cy="852.8" r="3.5" fill="#22c55e"/><circle cx="825.3" cy="607.2" r="3.5" fill="#22c55e"/><circle cx="795.1" cy="603.5" r="3.5" fill="#22c55e"/><circle cx="774.5" cy="617.7" r="3.5" fill="#22c55e"/><circle cx="830.8" cy="634.4" r="3.5" fill="#22c55e"/><circle cx="888.4" cy="611.4" r="3.5" fill="#22c55e"/><circle cx="985.9" cy="630.0" r="3.5" fill="#22c55e"/><circle cx="887.1" cy="631.4" r="3.5" fill="#22c55e"/><circle cx="892.6" cy="642.7" r="3.5" fill="#22c55e"/><circle cx="911.8" cy="635.8" r="3.5" fill="#22c55e"/><circle cx="920.0" cy="634.1" r="3.5" fill="#22c55e"/><circle cx="915.9" cy="639.6" r="3.5" fill="#22c55e"/><circle cx="932.4" cy="641.6" r="3.5" fill="#22c55e"/><circle cx="970.8" cy="649.1" r="3.5" fill="#22c55e"/><circle cx="850.0" cy="647.9" r="3.5" fill="#22c55e"/><circle cx="950.1" cy="648.6" r="3.5" fill="#22c55e"/><circle cx="953.0" cy="650.2" r="3.5" fill="#22c55e"/><circle cx="963.9" cy="668.2" r="3.5" fill="#22c55e"/><circle cx="763.3" cy="684.5" r="3.5" fill="#22c55e"/><circle cx="747.1" cy="690.4" r="3.5" fill="#22c55e"/><circle cx="783.8" cy="694.8" r="3.5" fill="#22c55e"/><circle cx="931.0" cy="690.3" r="3.5" fill="#22c55e"/><circle cx="786.9" cy="713.3" r="3.5" fill="#22c55e"/><circle cx="851.4" cy="742.2" r="3.5" fill="#22c55e"/><circle cx="921.4" cy="740.7" r="3.5" fill="#22c55e"/><circle cx="1000.5" cy="734.6" r="3.5" fill="#22c55e"/><circle cx="998.3" cy="746.3" r="3.5" fill="#22c55e"/><circle cx="1001.0" cy="743.3" r="3.5" fill="#22c55e"/><circle cx="869.2" cy="752.7" r="3.5" fill="#22c55e"/><circle cx="859.6" cy="764.1" r="3.5" fill="#22c55e"/><circle cx="889.8" cy="758.2" r="3.5" fill="#22c55e"/><circle cx="748.2" cy="783.2" r="3.5" fill="#22c55e"/><circle cx="810.2" cy="766.7" r="3.5" fill="#22c55e"/><circle cx="799.2" cy="779.8" r="3.5" fill="#22c55e"/><circle cx="776.7" cy="781.0" r="3.5" fill="#22c55e"/><circle cx="808.8" cy="791.6" r="3.5" fill="#22c55e"/><circle cx="852.8" cy="789.1" r="3.5" fill="#22c55e"/><circle cx="990.0" cy="785.6" r="3.5" fill="#22c55e"/><circle cx="891.2" cy="799.1" r="3.5" fill="#22c55e"/><circle cx="744.3" cy="805.7" r="3.5" fill="#22c55e"/><circle cx="836.3" cy="800.4" r="3.5" fill="#22c55e"/><circle cx="829.4" cy="806.6" r="3.5" fill="#22c55e"/><circle cx="878.8" cy="807.7" r="3.5" fill="#22c55e"/><circle cx="771.8" cy="820.1" r="3.5" fill="#22c55e"/><circle cx="803.3" cy="827.1" r="3.5" fill="#22c55e"/><circle cx="761.6" cy="831.4" r="3.5" fill="#22c55e"/><circle cx="832.2" cy="823.3" r="3.5" fill="#22c55e"/><circle cx="870.6" cy="837.2" r="3.5" fill="#22c55e"/><circle cx="913.2" cy="823.4" r="3.5" fill="#22c55e"/><circle cx="928.3" cy="820.7" r="3.5" fill="#22c55e"/><circle cx="973.6" cy="835.7" r="3.5" fill="#22c55e"/><circle cx="922.8" cy="854.1" r="3.5" fill="#22c55e"/><circle cx="1020.5" cy="602.8" r="3.5" fill="#22c55e"/><circle cx="1050.7" cy="602.2" r="3.5" fill="#22c55e"/><circle cx="1180.0" cy="620.3" r="3.5" fill="#22c55e"/><circle cx="1169.0" cy="625.6" r="3.5" fill="#22c55e"/><circle cx="1194.5" cy="603.9" r="3.5" fill="#22c55e"/><circle cx="1253.0" cy="603.9" r="3.5" fill="#22c55e"/><circle cx="1216.0" cy="619.6" r="3.5" fill="#22c55e"/><circle cx="1244.8" cy="626.3" r="3.5" fill="#22c55e"/><circle cx="1158.0" cy="634.1" r="3.5" fill="#22c55e"/><circle cx="1175.9" cy="641.0" r="3.5" fill="#22c55e"/><circle cx="1074.0" cy="638.9" r="3.5" fill="#22c55e"/><circle cx="1080.6" cy="645.0" r="3.5" fill="#22c55e"/><circle cx="1082.3" cy="654.2" r="3.5" fill="#22c55e"/><circle cx="1038.3" cy="652.3" r="3.5" fill="#22c55e"/><circle cx="1164.9" cy="663.5" r="3.5" fill="#22c55e"/><circle cx="1134.7" cy="681.1" r="3.5" fill="#22c55e"/><circle cx="1019.1" cy="691.7" r="3.5" fill="#22c55e"/><circle cx="1136.1" cy="696.3" r="3.5" fill="#22c55e"/><circle cx="1208.8" cy="721.2" r="3.5" fill="#22c55e"/><circle cx="1041.1" cy="727.5" r="3.5" fill="#22c55e"/><circle cx="1083.6" cy="726.1" r="3.5" fill="#22c55e"/><circle cx="1110.8" cy="742.9" r="3.5" fill="#22c55e"/><circle cx="1259.9" cy="726.1" r="3.5" fill="#22c55e"/><circle cx="1142.9" cy="747.8" r="3.5" fill="#22c55e"/><circle cx="1206.1" cy="748.2" r="3.5" fill="#22c55e"/><circle cx="1049.9" cy="749.7" r="3.5" fill="#22c55e"/><circle cx="1177.3" cy="751.2" r="3.5" fill="#22c55e"/><circle cx="1043.8" cy="765.0" r="3.5" fill="#22c55e"/><circle cx="1125.1" cy="758.8" r="3.5" fill="#22c55e"/><circle cx="1170.4" cy="769.9" r="3.5" fill="#22c55e"/><circle cx="1027.4" cy="779.9" r="3.5" fill="#22c55e"/><circle cx="1028.7" cy="786.1" r="3.5" fill="#22c55e"/><circle cx="1064.4" cy="797.5" r="3.5" fill="#22c55e"/><circle cx="1090.5" cy="794.2" r="3.5" fill="#22c55e"/><circle cx="1140.2" cy="794.8" r="3.5" fill="#22c55e"/><circle cx="1009.5" cy="828.0" r="3.5" fill="#22c55e"/><circle cx="1167.6" cy="829.8" r="3.5" fill="#22c55e"/><circle cx="1058.9" cy="851.0" r="3.5" fill="#22c55e"/><circle cx="431.8" cy="526.4" r="3.5" fill="#22c55e"/><circle cx="479.9" cy="527.5" r="3.5" fill="#22c55e"/><circle cx="272.1" cy="594.6" r="3.5" fill="#f59e0b"/><circle cx="276.5" cy="601.7" r="3.5" fill="#f59e0b"/><circle cx="412.4" cy="594.3" r="3.5" fill="#f59e0b"/><circle cx="317.4" cy="610.1" r="3.5" fill="#f59e0b"/><circle cx="343.5" cy="613.4" r="3.5" fill="#f59e0b"/><circle cx="437.4" cy="613.8" r="3.5" fill="#f59e0b"/><circle cx="364.1" cy="623.4" r="3.5" fill="#f59e0b"/><circle cx="388.8" cy="617.9" r="3.5" fill="#f59e0b"/><circle cx="474.9" cy="624.5" r="3.5" fill="#f59e0b"/><circle cx="250.2" cy="642.0" r="3.5" fill="#f59e0b"/><circle cx="372.3" cy="646.4" r="3.5" fill="#f59e0b"/><circle cx="327.0" cy="652.7" r="3.5" fill="#f59e0b"/><circle cx="391.8" cy="662.6" r="3.5" fill="#f59e0b"/><circle cx="413.8" cy="662.8" r="3.5" fill="#f59e0b"/><circle cx="287.2" cy="666.7" r="3.5" fill="#f59e0b"/><circle cx="232.3" cy="682.5" r="3.5" fill="#f59e0b"/><circle cx="321.5" cy="677.0" r="3.5" fill="#f59e0b"/><circle cx="405.5" cy="677.0" r="3.5" fill="#f59e0b"/><circle cx="365.7" cy="681.5" r="3.5" fill="#f59e0b"/><circle cx="338.3" cy="683.6" r="3.5" fill="#f59e0b"/><circle cx="350.4" cy="711.6" r="3.5" fill="#f59e0b"/><circle cx="225.5" cy="717.9" r="3.5" fill="#f59e0b"/><circle cx="258.4" cy="719.2" r="3.5" fill="#f59e0b"/><circle cx="325.7" cy="717.9" r="3.5" fill="#f59e0b"/><circle cx="349.0" cy="717.7" r="3.5" fill="#f59e0b"/><circle cx="247.4" cy="731.2" r="3.5" fill="#f59e0b"/><circle cx="248.8" cy="742.9" r="3.5" fill="#f59e0b"/><circle cx="280.4" cy="749.2" r="3.5" fill="#f59e0b"/><circle cx="295.5" cy="756.7" r="3.5" fill="#f59e0b"/><circle cx="357.5" cy="745.3" r="3.5" fill="#f59e0b"/><circle cx="374.0" cy="748.4" r="3.5" fill="#f59e0b"/><circle cx="398.7" cy="747.1" r="3.5" fill="#f59e0b"/><circle cx="456.6" cy="747.4" r="3.5" fill="#f59e0b"/><circle cx="448.4" cy="760.0" r="3.5" fill="#f59e0b"/><circle cx="399.8" cy="766.3" r="3.5" fill="#f59e0b"/><circle cx="320.2" cy="779.2" r="3.5" fill="#f59e0b"/><circle cx="242.9" cy="787.9" r="3.5" fill="#f59e0b"/><circle cx="265.3" cy="782.8" r="3.5" fill="#f59e0b"/><circle cx="215.8" cy="787.9" r="3.5" fill="#f59e0b"/><circle cx="352.0" cy="794.1" r="3.5" fill="#f59e0b"/><circle cx="246.0" cy="794.8" r="3.5" fill="#f59e0b"/><circle cx="269.7" cy="799.6" r="3.5" fill="#f59e0b"/><circle cx="302.3" cy="800.9" r="3.5" fill="#f59e0b"/><circle cx="316.0" cy="811.2" r="3.5" fill="#f59e0b"/><circle cx="288.6" cy="816.7" r="3.5" fill="#f59e0b"/><circle cx="385.2" cy="831.5" r="3.5" fill="#f59e0b"/><circle cx="467.6" cy="833.2" r="3.5" fill="#f59e0b"/><circle cx="375.3" cy="855.8" r="3.5" fill="#f59e0b"/><circle cx="218.6" cy="844.4" r="3.5" fill="#f59e0b"/><circle cx="551.6" cy="601.2" r="3.5" fill="#f59e0b"/><circle cx="514.5" cy="610.7" r="3.5" fill="#f59e0b"/><circle cx="591.4" cy="603.3" r="3.5" fill="#f59e0b"/><circle cx="592.8" cy="606.6" r="3.5" fill="#f59e0b"/><circle cx="606.5" cy="600.1" r="3.5" fill="#f59e0b"/><circle cx="730.0" cy="613.1" r="3.5" fill="#f59e0b"/><circle cx="662.8" cy="623.0" r="3.5" fill="#f59e0b"/><circle cx="666.9" cy="629.6" r="3.5" fill="#f59e0b"/><circle cx="547.5" cy="634.4" r="3.5" fill="#f59e0b"/><circle cx="717.7" cy="639.9" r="3.5" fill="#f59e0b"/><circle cx="693.0" cy="641.0" r="3.5" fill="#f59e0b"/><circle cx="602.4" cy="643.6" r="3.5" fill="#f59e0b"/><circle cx="500.8" cy="675.9" r="3.5" fill="#f59e0b"/><circle cx="572.2" cy="667.4" r="3.5" fill="#f59e0b"/><circle cx="702.6" cy="664.6" r="3.5" fill="#f59e0b"/><circle cx="676.5" cy="674.5" r="3.5" fill="#f59e0b"/><circle cx="698.1" cy="680.8" r="3.5" fill="#f59e0b"/><circle cx="719.3" cy="681.5" r="3.5" fill="#f59e0b"/><circle cx="590.3" cy="692.8" r="3.5" fill="#f59e0b"/><circle cx="588.7" cy="690.3" r="3.5" fill="#f59e0b"/><circle cx="506.3" cy="690.7" r="3.5" fill="#f59e0b"/><circle cx="671.0" cy="708.1" r="3.5" fill="#f59e0b"/><circle cx="655.9" cy="710.9" r="3.5" fill="#f59e0b"/><circle cx="550.2" cy="708.5" r="3.5" fill="#f59e0b"/><circle cx="488.7" cy="713.6" r="3.5" fill="#f59e0b"/><circle cx="697.1" cy="719.5" r="3.5" fill="#f59e0b"/><circle cx="553.0" cy="731.3" r="3.5" fill="#f59e0b"/><circle cx="526.5" cy="751.2" r="3.5" fill="#f59e0b"/><circle cx="542.0" cy="762.2" r="3.5" fill="#f59e0b"/><circle cx="532.4" cy="776.5" r="3.5" fill="#f59e0b"/><circle cx="664.2" cy="787.6" r="3.5" fill="#f59e0b"/><circle cx="688.9" cy="795.2" r="3.5" fill="#f59e0b"/><circle cx="525.5" cy="797.5" r="3.5" fill="#f59e0b"/><circle cx="546.1" cy="807.1" r="3.5" fill="#f59e0b"/><circle cx="620.2" cy="811.9" r="3.5" fill="#f59e0b"/><circle cx="675.1" cy="810.8" r="3.5" fill="#f59e0b"/><circle cx="522.8" cy="825.6" r="3.5" fill="#f59e0b"/><circle cx="509.0" cy="844.2" r="3.5" fill="#f59e0b"/><circle cx="520.0" cy="851.4" r="3.5" fill="#f59e0b"/><circle cx="573.6" cy="838.7" r="3.5" fill="#f59e0b"/><circle cx="556.0" cy="851.0" r="3.5" fill="#f59e0b"/><circle cx="624.3" cy="849.7" r="3.5" fill="#f59e0b"/><circle cx="837.7" cy="598.3" r="3.5" fill="#f59e0b"/><circle cx="759.1" cy="612.7" r="3.5" fill="#f59e0b"/><circle cx="893.9" cy="618.9" r="3.5" fill="#f59e0b"/><circle cx="921.4" cy="610.8" r="3.5" fill="#f59e0b"/><circle cx="892.6" cy="634.1" r="3.5" fill="#f59e0b"/><circle cx="994.1" cy="645.4" r="3.5" fill="#f59e0b"/><circle cx="800.6" cy="644.4" r="3.5" fill="#f59e0b"/><circle cx="906.3" cy="645.4" r="3.5" fill="#f59e0b"/><circle cx="907.7" cy="649.9" r="3.5" fill="#f59e0b"/><circle cx="856.9" cy="660.8" r="3.5" fill="#f59e0b"/><circle cx="809.7" cy="666.3" r="3.5" fill="#f59e0b"/><circle cx="926.9" cy="663.7" r="3.5" fill="#f59e0b"/><circle cx="903.5" cy="663.9" r="3.5" fill="#f59e0b"/><circle cx="785.5" cy="690.0" r="3.5" fill="#f59e0b"/><circle cx="874.7" cy="676.0" r="3.5" fill="#f59e0b"/><circle cx="866.5" cy="694.1" r="3.5" fill="#f59e0b"/><circle cx="862.4" cy="703.1" r="3.5" fill="#f59e0b"/><circle cx="933.7" cy="675.3" r="3.5" fill="#f59e0b"/><circle cx="948.8" cy="684.8" r="3.5" fill="#f59e0b"/><circle cx="900.8" cy="693.0" r="3.5" fill="#f59e0b"/><circle cx="863.7" cy="716.8" r="3.5" fill="#f59e0b"/><circle cx="918.6" cy="712.4" r="3.5" fill="#f59e0b"/><circle cx="944.7" cy="710.2" r="3.5" fill="#f59e0b"/><circle cx="804.2" cy="740.5" r="3.5" fill="#f59e0b"/><circle cx="807.5" cy="741.6" r="3.5" fill="#f59e0b"/><circle cx="873.3" cy="727.8" r="3.5" fill="#f59e0b"/><circle cx="917.3" cy="748.4" r="3.5" fill="#f59e0b"/><circle cx="789.6" cy="760.6" r="3.5" fill="#f59e0b"/><circle cx="969.4" cy="754.0" r="3.5" fill="#f59e0b"/><circle cx="983.2" cy="758.1" r="3.5" fill="#f59e0b"/><circle cx="741.3" cy="768.8" r="3.5" fill="#f59e0b"/><circle cx="779.7" cy="778.3" r="3.5" fill="#f59e0b"/><circle cx="877.5" cy="774.3" r="3.5" fill="#f59e0b"/><circle cx="884.3" cy="777.3" r="3.5" fill="#f59e0b"/><circle cx="911.8" cy="779.1" r="3.5" fill="#f59e0b"/><circle cx="828.0" cy="789.7" r="3.5" fill="#f59e0b"/><circle cx="839.0" cy="808.6" r="3.5" fill="#f59e0b"/><circle cx="817.1" cy="831.0" r="3.5" fill="#f59e0b"/><circle cx="880.2" cy="845.1" r="3.5" fill="#f59e0b"/><circle cx="947.5" cy="815.6" r="3.5" fill="#f59e0b"/><circle cx="980.4" cy="816.3" r="3.5" fill="#f59e0b"/><circle cx="955.7" cy="840.3" r="3.5" fill="#f59e0b"/><circle cx="1030.1" cy="620.7" r="3.5" fill="#f59e0b"/><circle cx="1155.3" cy="606.7" r="3.5" fill="#f59e0b"/><circle cx="1247.5" cy="595.0" r="3.5" fill="#f59e0b"/><circle cx="1162.2" cy="642.2" r="3.5" fill="#f59e0b"/><circle cx="1223.9" cy="638.3" r="3.5" fill="#f59e0b"/><circle cx="1228.0" cy="645.9" r="3.5" fill="#f59e0b"/><circle cx="1234.9" cy="649.2" r="3.5" fill="#f59e0b"/><circle cx="1063.0" cy="636.9" r="3.5" fill="#f59e0b"/><circle cx="1047.9" cy="641.6" r="3.5" fill="#f59e0b"/><circle cx="1035.6" cy="654.7" r="3.5" fill="#f59e0b"/><circle cx="1058.9" cy="668.3" r="3.5" fill="#f59e0b"/><circle cx="1075.9" cy="671.5" r="3.5" fill="#f59e0b"/><circle cx="1219.8" cy="666.8" r="3.5" fill="#f59e0b"/><circle cx="1203.3" cy="678.3" r="3.5" fill="#f59e0b"/><circle cx="1261.3" cy="681.8" r="3.5" fill="#f59e0b"/><circle cx="1052.1" cy="707.2" r="3.5" fill="#f59e0b"/><circle cx="1045.2" cy="714.0" r="3.5" fill="#f59e0b"/><circle cx="1097.6" cy="697.0" r="3.5" fill="#f59e0b"/><circle cx="1076.8" cy="711.6" r="3.5" fill="#f59e0b"/><circle cx="1144.3" cy="691.2" r="3.5" fill="#f59e0b"/><circle cx="1156.7" cy="705.8" r="3.5" fill="#f59e0b"/><circle cx="1192.4" cy="699.6" r="3.5" fill="#f59e0b"/><circle cx="1254.4" cy="701.3" r="3.5" fill="#f59e0b"/><circle cx="1039.4" cy="721.6" r="3.5" fill="#f59e0b"/><circle cx="1222.6" cy="722.0" r="3.5" fill="#f59e0b"/><circle cx="1032.8" cy="736.4" r="3.5" fill="#f59e0b"/><circle cx="1101.5" cy="742.3" r="3.5" fill="#f59e0b"/><circle cx="1151.2" cy="731.9" r="3.5" fill="#f59e0b"/><circle cx="1197.8" cy="728.5" r="3.5" fill="#f59e0b"/><circle cx="1240.7" cy="742.9" r="3.5" fill="#f59e0b"/><circle cx="1012.3" cy="750.0" r="3.5" fill="#f59e0b"/><circle cx="1194.5" cy="750.8" r="3.5" fill="#f59e0b"/><circle cx="1024.6" cy="756.6" r="3.5" fill="#f59e0b"/><circle cx="1237.1" cy="762.1" r="3.5" fill="#f59e0b"/><circle cx="1248.9" cy="770.0" r="3.5" fill="#f59e0b"/><circle cx="1202.0" cy="778.4" r="3.5" fill="#f59e0b"/><circle cx="1104.2" cy="799.6" r="3.5" fill="#f59e0b"/><circle cx="1181.4" cy="816.7" r="3.5" fill="#f59e0b"/><circle cx="1226.7" cy="820.1" r="3.5" fill="#f59e0b"/><circle cx="1173.1" cy="824.1" r="3.5" fill="#f59e0b"/><circle cx="1112.7" cy="840.6" r="3.5" fill="#f59e0b"/><circle cx="1141.6" cy="838.1" r="3.5" fill="#f59e0b"/><circle cx="1184.1" cy="836.8" r="3.5" fill="#f59e0b"/><circle cx="1008.1" cy="843.5" r="3.5" fill="#f59e0b"/><circle cx="1015.0" cy="846.2" r="3.5" fill="#f59e0b"/><circle cx="279.0" cy="366.8" r="3.5" fill="#f59e0b"/><circle cx="251.4" cy="451.6" r="3.5" fill="#f59e0b"/><circle cx="234.9" cy="534.6" r="3.5" fill="#f59e0b"/><circle cx="367.1" cy="487.2" r="3.5" fill="#f59e0b"/><circle cx="902.0" cy="448.0" r="3.5" fill="#f59e0b"/><circle cx="811.0" cy="573.5" r="3.5" fill="#f59e0b"/><circle cx="270.8" cy="602.2" r="3.5" fill="#ef4444"/><circle cx="284.5" cy="600.8" r="3.5" fill="#ef4444"/><circle cx="331.1" cy="593.6" r="3.5" fill="#ef4444"/><circle cx="433.0" cy="599.7" r="3.5" fill="#ef4444"/><circle cx="243.3" cy="607.6" r="3.5" fill="#ef4444"/><circle cx="228.2" cy="612.7" r="3.5" fill="#ef4444"/><circle cx="213.4" cy="622.7" r="3.5" fill="#ef4444"/><circle cx="305.1" cy="624.8" r="3.5" fill="#ef4444"/><circle cx="254.3" cy="630.0" r="3.5" fill="#ef4444"/><circle cx="225.5" cy="645.4" r="3.5" fill="#ef4444"/><circle cx="346.5" cy="646.4" r="3.5" fill="#ef4444"/><circle cx="287.2" cy="663.7" r="3.5" fill="#ef4444"/><circle cx="229.6" cy="669.0" r="3.5" fill="#ef4444"/><circle cx="306.4" cy="670.4" r="3.5" fill="#ef4444"/><circle cx="445.6" cy="678.8" r="3.5" fill="#ef4444"/><circle cx="246.0" cy="690.0" r="3.5" fill="#ef4444"/><circle cx="435.7" cy="690.4" r="3.5" fill="#ef4444"/><circle cx="416.5" cy="700.3" r="3.5" fill="#ef4444"/><circle cx="259.8" cy="707.4" r="3.5" fill="#ef4444"/><circle cx="328.4" cy="712.7" r="3.5" fill="#ef4444"/><circle cx="317.4" cy="714.4" r="3.5" fill="#ef4444"/><circle cx="420.6" cy="721.6" r="3.5" fill="#ef4444"/><circle cx="273.5" cy="724.1" r="3.5" fill="#ef4444"/><circle cx="226.8" cy="731.6" r="3.5" fill="#ef4444"/><circle cx="262.5" cy="742.9" r="3.5" fill="#ef4444"/><circle cx="290.0" cy="744.0" r="3.5" fill="#ef4444"/><circle cx="310.6" cy="743.7" r="3.5" fill="#ef4444"/><circle cx="257.0" cy="753.6" r="3.5" fill="#ef4444"/><circle cx="314.7" cy="753.8" r="3.5" fill="#ef4444"/><circle cx="324.3" cy="748.8" r="3.5" fill="#ef4444"/><circle cx="333.5" cy="753.8" r="3.5" fill="#ef4444"/><circle cx="428.9" cy="744.0" r="3.5" fill="#ef4444"/><circle cx="473.9" cy="736.8" r="3.5" fill="#ef4444"/><circle cx="415.2" cy="756.6" r="3.5" fill="#ef4444"/><circle cx="423.4" cy="762.1" r="3.5" fill="#ef4444"/><circle cx="294.1" cy="776.2" r="3.5" fill="#ef4444"/><circle cx="356.1" cy="774.7" r="3.5" fill="#ef4444"/><circle cx="244.7" cy="784.7" r="3.5" fill="#ef4444"/><circle cx="335.5" cy="786.1" r="3.5" fill="#ef4444"/><circle cx="268.0" cy="795.4" r="3.5" fill="#ef4444"/><circle cx="320.4" cy="803.7" r="3.5" fill="#ef4444"/><circle cx="387.7" cy="803.4" r="3.5" fill="#ef4444"/><circle cx="422.0" cy="804.5" r="3.5" fill="#ef4444"/><circle cx="363.0" cy="808.8" r="3.5" fill="#ef4444"/><circle cx="236.4" cy="825.2" r="3.5" fill="#ef4444"/><circle cx="378.8" cy="827.7" r="3.5" fill="#ef4444"/><circle cx="380.8" cy="829.3" r="3.5" fill="#ef4444"/><circle cx="442.9" cy="831.1" r="3.5" fill="#ef4444"/><circle cx="464.8" cy="828.4" r="3.5" fill="#ef4444"/><circle cx="463.2" cy="831.5" r="3.5" fill="#ef4444"/><circle cx="434.6" cy="835.9" r="3.5" fill="#ef4444"/><circle cx="408.3" cy="850.3" r="3.5" fill="#ef4444"/><circle cx="438.8" cy="854.9" r="3.5" fill="#ef4444"/><circle cx="240.6" cy="849.4" r="3.5" fill="#ef4444"/><circle cx="483.0" cy="593.6" r="3.5" fill="#ef4444"/><circle cx="558.5" cy="593.0" r="3.5" fill="#ef4444"/><circle cx="557.1" cy="607.6" r="3.5" fill="#ef4444"/><circle cx="495.3" cy="619.6" r="3.5" fill="#ef4444"/><circle cx="502.2" cy="641.6" r="3.5" fill="#ef4444"/><circle cx="535.1" cy="644.7" r="3.5" fill="#ef4444"/><circle cx="570.8" cy="631.9" r="3.5" fill="#ef4444"/><circle cx="520.0" cy="665.0" r="3.5" fill="#ef4444"/><circle cx="521.7" cy="668.0" r="3.5" fill="#ef4444"/><circle cx="569.4" cy="671.2" r="3.5" fill="#ef4444"/><circle cx="702.6" cy="680.4" r="3.5" fill="#ef4444"/><circle cx="724.8" cy="689.3" r="3.5" fill="#ef4444"/><circle cx="701.5" cy="690.8" r="3.5" fill="#ef4444"/><circle cx="737.5" cy="691.4" r="3.5" fill="#ef4444"/><circle cx="553.0" cy="686.6" r="3.5" fill="#ef4444"/><circle cx="500.8" cy="692.1" r="3.5" fill="#ef4444"/><circle cx="623.0" cy="694.3" r="3.5" fill="#ef4444"/><circle cx="649.1" cy="695.8" r="3.5" fill="#ef4444"/><circle cx="672.4" cy="717.7" r="3.5" fill="#ef4444"/><circle cx="639.4" cy="721.6" r="3.5" fill="#ef4444"/><circle cx="478.8" cy="739.2" r="3.5" fill="#ef4444"/><circle cx="481.6" cy="736.1" r="3.5" fill="#ef4444"/><circle cx="561.2" cy="728.6" r="3.5" fill="#ef4444"/><circle cx="522.8" cy="741.6" r="3.5" fill="#ef4444"/><circle cx="532.4" cy="749.0" r="3.5" fill="#ef4444"/><circle cx="572.2" cy="759.7" r="3.5" fill="#ef4444"/><circle cx="653.2" cy="727.2" r="3.5" fill="#ef4444"/><circle cx="651.8" cy="739.8" r="3.5" fill="#ef4444"/><circle cx="730.0" cy="727.8" r="3.5" fill="#ef4444"/><circle cx="683.4" cy="744.0" r="3.5" fill="#ef4444"/><circle cx="612.0" cy="759.1" r="3.5" fill="#ef4444"/><circle cx="629.8" cy="765.9" r="3.5" fill="#ef4444"/><circle cx="609.2" cy="778.0" r="3.5" fill="#ef4444"/><circle cx="687.5" cy="761.5" r="3.5" fill="#ef4444"/><circle cx="583.2" cy="791.6" r="3.5" fill="#ef4444"/><circle cx="631.2" cy="792.0" r="3.5" fill="#ef4444"/><circle cx="736.9" cy="783.8" r="3.5" fill="#ef4444"/><circle cx="621.6" cy="817.7" r="3.5" fill="#ef4444"/><circle cx="658.7" cy="816.4" r="3.5" fill="#ef4444"/><circle cx="690.2" cy="809.9" r="3.5" fill="#ef4444"/><circle cx="568.1" cy="825.2" r="3.5" fill="#ef4444"/><circle cx="734.2" cy="826.3" r="3.5" fill="#ef4444"/><circle cx="496.7" cy="841.4" r="3.5" fill="#ef4444"/><circle cx="606.5" cy="853.8" r="3.5" fill="#ef4444"/><circle cx="682.0" cy="853.5" r="3.5" fill="#ef4444"/><circle cx="898.1" cy="597.1" r="3.5" fill="#ef4444"/><circle cx="951.6" cy="610.1" r="3.5" fill="#ef4444"/><circle cx="940.6" cy="614.8" r="3.5" fill="#ef4444"/><circle cx="946.1" cy="623.8" r="3.5" fill="#ef4444"/><circle cx="785.5" cy="638.8" r="3.5" fill="#ef4444"/><circle cx="839.0" cy="646.8" r="3.5" fill="#ef4444"/><circle cx="876.1" cy="644.8" r="3.5" fill="#ef4444"/><circle cx="851.1" cy="659.8" r="3.5" fill="#ef4444"/><circle cx="812.9" cy="674.6" r="3.5" fill="#ef4444"/><circle cx="924.1" cy="657.3" r="3.5" fill="#ef4444"/><circle cx="981.8" cy="668.5" r="3.5" fill="#ef4444"/><circle cx="996.9" cy="666.9" r="3.5" fill="#ef4444"/><circle cx="769.0" cy="694.1" r="3.5" fill="#ef4444"/><circle cx="823.1" cy="688.9" r="3.5" fill="#ef4444"/><circle cx="826.7" cy="688.9" r="3.5" fill="#ef4444"/><circle cx="935.1" cy="678.8" r="3.5" fill="#ef4444"/><circle cx="926.9" cy="679.0" r="3.5" fill="#ef4444"/><circle cx="910.4" cy="692.8" r="3.5" fill="#ef4444"/><circle cx="972.2" cy="696.2" r="3.5" fill="#ef4444"/><circle cx="983.2" cy="704.1" r="3.5" fill="#ef4444"/><circle cx="844.5" cy="710.2" r="3.5" fill="#ef4444"/><circle cx="887.1" cy="716.4" r="3.5" fill="#ef4444"/><circle cx="929.6" cy="718.6" r="3.5" fill="#ef4444"/><circle cx="962.6" cy="715.7" r="3.5" fill="#ef4444"/><circle cx="958.5" cy="722.0" r="3.5" fill="#ef4444"/><circle cx="819.8" cy="733.0" r="3.5" fill="#ef4444"/><circle cx="833.5" cy="743.0" r="3.5" fill="#ef4444"/><circle cx="880.2" cy="741.2" r="3.5" fill="#ef4444"/><circle cx="988.9" cy="731.3" r="3.5" fill="#ef4444"/><circle cx="759.1" cy="749.9" r="3.5" fill="#ef4444"/><circle cx="848.6" cy="758.2" r="3.5" fill="#ef4444"/><circle cx="987.3" cy="763.6" r="3.5" fill="#ef4444"/><circle cx="753.6" cy="774.2" r="3.5" fill="#ef4444"/><circle cx="746.8" cy="775.9" r="3.5" fill="#ef4444"/><circle cx="755.0" cy="779.4" r="3.5" fill="#ef4444"/><circle cx="749.5" cy="793.1" r="3.5" fill="#ef4444"/><circle cx="817.1" cy="775.0" r="3.5" fill="#ef4444"/><circle cx="818.4" cy="782.1" r="3.5" fill="#ef4444"/><circle cx="872.0" cy="778.1" r="3.5" fill="#ef4444"/><circle cx="914.5" cy="773.5" r="3.5" fill="#ef4444"/><circle cx="909.0" cy="803.7" r="3.5" fill="#ef4444"/><circle cx="766.3" cy="833.6" r="3.5" fill="#ef4444"/><circle cx="772.9" cy="840.1" r="3.5" fill="#ef4444"/><circle cx="858.2" cy="818.6" r="3.5" fill="#ef4444"/><circle cx="942.0" cy="839.9" r="3.5" fill="#ef4444"/><circle cx="932.4" cy="856.8" r="3.5" fill="#ef4444"/><circle cx="939.2" cy="851.2" r="3.5" fill="#ef4444"/><circle cx="967.2" cy="857.2" r="3.5" fill="#ef4444"/><circle cx="979.0" cy="855.3" r="3.5" fill="#ef4444"/><circle cx="1088.6" cy="608.1" r="3.5" fill="#ef4444"/><circle cx="1133.3" cy="613.8" r="3.5" fill="#ef4444"/><circle cx="1191.0" cy="605.0" r="3.5" fill="#ef4444"/><circle cx="1210.2" cy="634.3" r="3.5" fill="#ef4444"/><circle cx="1221.2" cy="631.7" r="3.5" fill="#ef4444"/><circle cx="1200.6" cy="639.1" r="3.5" fill="#ef4444"/><circle cx="1237.7" cy="656.4" r="3.5" fill="#ef4444"/><circle cx="1061.7" cy="643.3" r="3.5" fill="#ef4444"/><circle cx="1105.9" cy="644.4" r="3.5" fill="#ef4444"/><circle cx="1121.0" cy="645.1" r="3.5" fill="#ef4444"/><circle cx="1094.9" cy="672.0" r="3.5" fill="#ef4444"/><circle cx="1196.5" cy="675.2" r="3.5" fill="#ef4444"/><circle cx="1013.6" cy="689.6" r="3.5" fill="#ef4444"/><circle cx="1027.4" cy="687.5" r="3.5" fill="#ef4444"/><circle cx="1087.8" cy="703.3" r="3.5" fill="#ef4444"/><circle cx="1230.8" cy="694.3" r="3.5" fill="#ef4444"/><circle cx="1258.5" cy="713.2" r="3.5" fill="#ef4444"/><circle cx="1037.2" cy="722.0" r="3.5" fill="#ef4444"/><circle cx="1093.2" cy="738.1" r="3.5" fill="#ef4444"/><circle cx="1119.6" cy="739.2" r="3.5" fill="#ef4444"/><circle cx="1199.2" cy="752.6" r="3.5" fill="#ef4444"/><circle cx="1118.2" cy="755.8" r="3.5" fill="#ef4444"/><circle cx="1229.4" cy="767.3" r="3.5" fill="#ef4444"/><circle cx="1017.7" cy="784.0" r="3.5" fill="#ef4444"/><circle cx="1060.3" cy="782.8" r="3.5" fill="#ef4444"/><circle cx="1100.4" cy="779.2" r="3.5" fill="#ef4444"/><circle cx="1111.4" cy="808.6" r="3.5" fill="#ef4444"/><circle cx="1007.0" cy="803.7" r="3.5" fill="#ef4444"/><circle cx="1185.5" cy="806.7" r="3.5" fill="#ef4444"/><circle cx="1211.6" cy="814.0" r="3.5" fill="#ef4444"/><circle cx="1153.9" cy="823.0" r="3.5" fill="#ef4444"/><circle cx="1114.1" cy="832.6" r="3.5" fill="#ef4444"/><circle cx="1257.1" cy="831.8" r="3.5" fill="#ef4444"/><circle cx="1132.0" cy="851.9" r="3.5" fill="#ef4444"/><circle cx="1217.1" cy="854.9" r="3.5" fill="#ef4444"/><circle cx="233.4" cy="340.6" r="3.5" fill="#ef4444"/><circle cx="283.0" cy="541.1" r="3.5" fill="#ef4444"/><circle cx="347.7" cy="473.9" r="3.5" fill="#ef4444"/><circle cx="354.5" cy="504.5" r="3.5" fill="#ef4444"/><circle cx="486.7" cy="376.5" r="3.5" fill="#ef4444"/><circle cx="632.6" cy="360.0" r="3.5" fill="#ef4444"/><circle cx="530.9" cy="573.8" r="3.5" fill="#ef4444"/><circle cx="426.1" cy="594.3" r="3.5" fill="#8b5cf6"/><circle cx="380.8" cy="602.8" r="3.5" fill="#8b5cf6"/><circle cx="288.6" cy="610.7" r="3.5" fill="#8b5cf6"/><circle cx="353.4" cy="634.1" r="3.5" fill="#8b5cf6"/><circle cx="406.9" cy="634.0" r="3.5" fill="#8b5cf6"/><circle cx="459.4" cy="627.6" r="3.5" fill="#8b5cf6"/><circle cx="247.4" cy="636.9" r="3.5" fill="#8b5cf6"/><circle cx="255.7" cy="650.5" r="3.5" fill="#8b5cf6"/><circle cx="243.3" cy="660.2" r="3.5" fill="#8b5cf6"/><circle cx="469.0" cy="652.8" r="3.5" fill="#8b5cf6"/><circle cx="449.7" cy="657.8" r="3.5" fill="#8b5cf6"/><circle cx="413.8" cy="684.2" r="3.5" fill="#8b5cf6"/><circle cx="447.0" cy="685.6" r="3.5" fill="#8b5cf6"/><circle cx="437.4" cy="698.5" r="3.5" fill="#8b5cf6"/><circle cx="274.9" cy="699.3" r="3.5" fill="#8b5cf6"/><circle cx="218.6" cy="705.1" r="3.5" fill="#8b5cf6"/><circle cx="448.4" cy="705.5" r="3.5" fill="#8b5cf6"/><circle cx="430.3" cy="707.6" r="3.5" fill="#8b5cf6"/><circle cx="464.8" cy="708.3" r="3.5" fill="#8b5cf6"/><circle cx="239.2" cy="712.4" r="3.5" fill="#8b5cf6"/><circle cx="330.1" cy="751.8" r="3.5" fill="#8b5cf6"/><circle cx="367.1" cy="740.8" r="3.5" fill="#8b5cf6"/><circle cx="382.2" cy="752.2" r="3.5" fill="#8b5cf6"/><circle cx="442.9" cy="754.0" r="3.5" fill="#8b5cf6"/><circle cx="404.2" cy="762.6" r="3.5" fill="#8b5cf6"/><circle cx="334.2" cy="779.4" r="3.5" fill="#8b5cf6"/><circle cx="383.6" cy="780.2" r="3.5" fill="#8b5cf6"/><circle cx="246.0" cy="798.6" r="3.5" fill="#8b5cf6"/><circle cx="261.1" cy="798.2" r="3.5" fill="#8b5cf6"/><circle cx="265.3" cy="802.0" r="3.5" fill="#8b5cf6"/><circle cx="419.3" cy="796.9" r="3.5" fill="#8b5cf6"/><circle cx="358.9" cy="801.2" r="3.5" fill="#8b5cf6"/><circle cx="292.7" cy="807.9" r="3.5" fill="#8b5cf6"/><circle cx="347.6" cy="835.9" r="3.5" fill="#8b5cf6"/><circle cx="474.5" cy="825.0" r="3.5" fill="#8b5cf6"/><circle cx="423.4" cy="839.8" r="3.5" fill="#8b5cf6"/><circle cx="417.9" cy="845.0" r="3.5" fill="#8b5cf6"/><circle cx="395.9" cy="848.7" r="3.5" fill="#8b5cf6"/><circle cx="424.8" cy="851.0" r="3.5" fill="#8b5cf6"/><circle cx="270.8" cy="854.9" r="3.5" fill="#8b5cf6"/><circle cx="563.9" cy="599.4" r="3.5" fill="#8b5cf6"/><circle cx="492.6" cy="604.9" r="3.5" fill="#8b5cf6"/><circle cx="515.9" cy="615.6" r="3.5" fill="#8b5cf6"/><circle cx="500.8" cy="623.8" r="3.5" fill="#8b5cf6"/><circle cx="539.2" cy="613.8" r="3.5" fill="#8b5cf6"/><circle cx="584.5" cy="620.1" r="3.5" fill="#8b5cf6"/><circle cx="650.4" cy="599.1" r="3.5" fill="#8b5cf6"/><circle cx="706.7" cy="613.8" r="3.5" fill="#8b5cf6"/><circle cx="487.1" cy="635.8" r="3.5" fill="#8b5cf6"/><circle cx="535.1" cy="637.4" r="3.5" fill="#8b5cf6"/><circle cx="559.8" cy="637.2" r="3.5" fill="#8b5cf6"/><circle cx="703.6" cy="633.3" r="3.5" fill="#8b5cf6"/><circle cx="709.5" cy="633.3" r="3.5" fill="#8b5cf6"/><circle cx="629.8" cy="645.0" r="3.5" fill="#8b5cf6"/><circle cx="638.1" cy="648.1" r="3.5" fill="#8b5cf6"/><circle cx="480.2" cy="661.9" r="3.5" fill="#8b5cf6"/><circle cx="511.8" cy="665.0" r="3.5" fill="#8b5cf6"/><circle cx="517.3" cy="668.7" r="3.5" fill="#8b5cf6"/><circle cx="529.6" cy="667.6" r="3.5" fill="#8b5cf6"/><circle cx="574.9" cy="673.1" r="3.5" fill="#8b5cf6"/><circle cx="581.8" cy="673.1" r="3.5" fill="#8b5cf6"/><circle cx="588.7" cy="669.7" r="3.5" fill="#8b5cf6"/><circle cx="657.3" cy="678.6" r="3.5" fill="#8b5cf6"/><circle cx="669.6" cy="675.3" r="3.5" fill="#8b5cf6"/><circle cx="715.2" cy="677.4" r="3.5" fill="#8b5cf6"/><circle cx="616.1" cy="682.7" r="3.5" fill="#8b5cf6"/><circle cx="642.2" cy="681.1" r="3.5" fill="#8b5cf6"/><circle cx="562.6" cy="690.7" r="3.5" fill="#8b5cf6"/><circle cx="639.4" cy="703.3" r="3.5" fill="#8b5cf6"/><circle cx="728.9" cy="707.6" r="3.5" fill="#8b5cf6"/><circle cx="737.9" cy="703.7" r="3.5" fill="#8b5cf6"/><circle cx="485.7" cy="710.9" r="3.5" fill="#8b5cf6"/><circle cx="579.0" cy="743.3" r="3.5" fill="#8b5cf6"/><circle cx="640.8" cy="742.9" r="3.5" fill="#8b5cf6"/><circle cx="696.0" cy="725.4" r="3.5" fill="#8b5cf6"/><circle cx="691.6" cy="729.1" r="3.5" fill="#8b5cf6"/><circle cx="705.6" cy="731.6" r="3.5" fill="#8b5cf6"/><circle cx="708.1" cy="740.3" r="3.5" fill="#8b5cf6"/><circle cx="735.8" cy="737.1" r="3.5" fill="#8b5cf6"/><circle cx="676.5" cy="749.0" r="3.5" fill="#8b5cf6"/><circle cx="544.7" cy="769.8" r="3.5" fill="#8b5cf6"/><circle cx="665.5" cy="796.5" r="3.5" fill="#8b5cf6"/><circle cx="668.3" cy="804.5" r="3.5" fill="#8b5cf6"/><circle cx="727.6" cy="805.5" r="3.5" fill="#8b5cf6"/><circle cx="543.4" cy="799.6" r="3.5" fill="#8b5cf6"/><circle cx="536.5" cy="824.5" r="3.5" fill="#8b5cf6"/><circle cx="610.6" cy="834.3" r="3.5" fill="#8b5cf6"/><circle cx="713.8" cy="829.1" r="3.5" fill="#8b5cf6"/><circle cx="672.4" cy="842.1" r="3.5" fill="#8b5cf6"/><circle cx="682.0" cy="838.7" r="3.5" fill="#8b5cf6"/><circle cx="577.7" cy="843.9" r="3.5" fill="#8b5cf6"/><circle cx="548.4" cy="849.0" r="3.5" fill="#8b5cf6"/><circle cx="554.3" cy="847.9" r="3.5" fill="#8b5cf6"/><circle cx="572.2" cy="856.2" r="3.5" fill="#8b5cf6"/><circle cx="635.3" cy="851.4" r="3.5" fill="#8b5cf6"/><circle cx="834.9" cy="603.9" r="3.5" fill="#8b5cf6"/><circle cx="744.0" cy="621.0" r="3.5" fill="#8b5cf6"/><circle cx="814.3" cy="628.7" r="3.5" fill="#8b5cf6"/><circle cx="899.4" cy="621.4" r="3.5" fill="#8b5cf6"/><circle cx="977.7" cy="638.3" r="3.5" fill="#8b5cf6"/><circle cx="968.1" cy="642.9" r="3.5" fill="#8b5cf6"/><circle cx="764.6" cy="636.2" r="3.5" fill="#8b5cf6"/><circle cx="855.5" cy="646.4" r="3.5" fill="#8b5cf6"/><circle cx="851.4" cy="655.4" r="3.5" fill="#8b5cf6"/><circle cx="852.8" cy="671.2" r="3.5" fill="#8b5cf6"/><circle cx="807.5" cy="667.8" r="3.5" fill="#8b5cf6"/><circle cx="750.9" cy="675.9" r="3.5" fill="#8b5cf6"/><circle cx="742.7" cy="687.5" r="3.5" fill="#8b5cf6"/><circle cx="877.5" cy="691.2" r="3.5" fill="#8b5cf6"/><circle cx="936.5" cy="683.1" r="3.5" fill="#8b5cf6"/><circle cx="961.2" cy="685.5" r="3.5" fill="#8b5cf6"/><circle cx="991.4" cy="690.4" r="3.5" fill="#8b5cf6"/><circle cx="790.7" cy="733.7" r="3.5" fill="#8b5cf6"/><circle cx="793.7" cy="736.1" r="3.5" fill="#8b5cf6"/><circle cx="957.4" cy="727.9" r="3.5" fill="#8b5cf6"/><circle cx="778.4" cy="754.9" r="3.5" fill="#8b5cf6"/><circle cx="845.9" cy="772.7" r="3.5" fill="#8b5cf6"/><circle cx="976.3" cy="803.1" r="3.5" fill="#8b5cf6"/><circle cx="741.3" cy="808.8" r="3.5" fill="#8b5cf6"/><circle cx="788.0" cy="801.5" r="3.5" fill="#8b5cf6"/><circle cx="770.1" cy="816.2" r="3.5" fill="#8b5cf6"/><circle cx="771.5" cy="824.7" r="3.5" fill="#8b5cf6"/><circle cx="785.5" cy="828.4" r="3.5" fill="#8b5cf6"/><circle cx="753.6" cy="828.8" r="3.5" fill="#8b5cf6"/><circle cx="752.3" cy="834.8" r="3.5" fill="#8b5cf6"/><circle cx="895.3" cy="827.3" r="3.5" fill="#8b5cf6"/><circle cx="999.6" cy="822.6" r="3.5" fill="#8b5cf6"/><circle cx="821.2" cy="851.6" r="3.5" fill="#8b5cf6"/><circle cx="944.7" cy="851.0" r="3.5" fill="#8b5cf6"/><circle cx="965.3" cy="854.5" r="3.5" fill="#8b5cf6"/><circle cx="1009.5" cy="597.6" r="3.5" fill="#8b5cf6"/><circle cx="1005.4" cy="615.2" r="3.5" fill="#8b5cf6"/><circle cx="1092.1" cy="609.7" r="3.5" fill="#8b5cf6"/><circle cx="1108.6" cy="619.7" r="3.5" fill="#8b5cf6"/><circle cx="1138.8" cy="620.0" r="3.5" fill="#8b5cf6"/><circle cx="1085.0" cy="646.5" r="3.5" fill="#8b5cf6"/><circle cx="1030.1" cy="652.3" r="3.5" fill="#8b5cf6"/><circle cx="1054.8" cy="659.0" r="3.5" fill="#8b5cf6"/><circle cx="1031.5" cy="663.7" r="3.5" fill="#8b5cf6"/><circle cx="1053.4" cy="675.0" r="3.5" fill="#8b5cf6"/><circle cx="1069.6" cy="674.5" r="3.5" fill="#8b5cf6"/><circle cx="1071.3" cy="672.3" r="3.5" fill="#8b5cf6"/><circle cx="1173.1" cy="653.8" r="3.5" fill="#8b5cf6"/><circle cx="1212.9" cy="669.8" r="3.5" fill="#8b5cf6"/><circle cx="1255.8" cy="667.9" r="3.5" fill="#8b5cf6"/><circle cx="1034.2" cy="702.6" r="3.5" fill="#8b5cf6"/><circle cx="1057.6" cy="699.8" r="3.5" fill="#8b5cf6"/><circle cx="1079.5" cy="696.3" r="3.5" fill="#8b5cf6"/><circle cx="1152.5" cy="693.0" r="3.5" fill="#8b5cf6"/><circle cx="1148.4" cy="702.0" r="3.5" fill="#8b5cf6"/><circle cx="1186.9" cy="692.8" r="3.5" fill="#8b5cf6"/><circle cx="1250.3" cy="686.2" r="3.5" fill="#8b5cf6"/><circle cx="1020.5" cy="717.9" r="3.5" fill="#8b5cf6"/><circle cx="1065.8" cy="731.9" r="3.5" fill="#8b5cf6"/><circle cx="1098.7" cy="732.6" r="3.5" fill="#8b5cf6"/><circle cx="1105.9" cy="744.2" r="3.5" fill="#8b5cf6"/><circle cx="1130.6" cy="729.8" r="3.5" fill="#8b5cf6"/><circle cx="1160.8" cy="739.4" r="3.5" fill="#8b5cf6"/><circle cx="1046.6" cy="751.0" r="3.5" fill="#8b5cf6"/><circle cx="1214.3" cy="757.4" r="3.5" fill="#8b5cf6"/><circle cx="1067.2" cy="769.8" r="3.5" fill="#8b5cf6"/><circle cx="1232.4" cy="763.2" r="3.5" fill="#8b5cf6"/><circle cx="1218.4" cy="786.9" r="3.5" fill="#8b5cf6"/><circle cx="1122.3" cy="780.2" r="3.5" fill="#8b5cf6"/><circle cx="1096.0" cy="800.9" r="3.5" fill="#8b5cf6"/><circle cx="1127.8" cy="801.8" r="3.5" fill="#8b5cf6"/><circle cx="1004.3" cy="806.7" r="3.5" fill="#8b5cf6"/><circle cx="1188.2" cy="811.8" r="3.5" fill="#8b5cf6"/><circle cx="1068.5" cy="819.0" r="3.5" fill="#8b5cf6"/><circle cx="1056.2" cy="829.3" r="3.5" fill="#8b5cf6"/><circle cx="1225.3" cy="836.5" r="3.5" fill="#8b5cf6"/><circle cx="1086.4" cy="839.4" r="3.5" fill="#8b5cf6"/><circle cx="1039.7" cy="847.1" r="3.5" fill="#8b5cf6"/><circle cx="1159.4" cy="852.7" r="3.5" fill="#8b5cf6"/><circle cx="241.7" cy="441.6" r="3.5" fill="#8b5cf6"/><circle cx="613.2" cy="305.8" r="3.5" fill="#8b5cf6"/><circle cx="593.8" cy="416.1" r="3.5" fill="#8b5cf6"/><circle cx="598.1" cy="557.6" r="3.5" fill="#8b5cf6"/></g>
<text transform="translate(136.3,554) rotate(-90)" text-anchor="middle" dy="0.36em" font-weight="bold" font-size="14.1" textLength="117.5" lengthAdjust="spacing" fill="#111">Count of Amount</text>
<text x="737.5" y="942.6" text-anchor="middle" font-weight="bold" font-size="14.5" fill="#111">Date</text>
<rect x="213.4" y="930.2" width="1049.8" height="9.5" fill="#808080"/>
</svg><div class="vl" style="left:1647px;top:62px;height:936px"></div><div style="position:absolute;top:80.30px;line-height:20px;font-size:16.3px;color:#f2f2f2;white-space:nowrap;font-weight:bold;left:1399.00px;">Visualizations</div><svg style="left:1615px;top:84px" width="10" height="12" viewBox="0 0 10 12" fill="none" stroke="#9a9a9a" stroke-width="1.4" stroke-linecap="round" stroke-linejoin="round"><path d="M2.6 1.4L7.4 6 2.6 10.6"/></svg><div class="hl" style="left:1384px;top:117px;width:263px"></div><div style="position:absolute;left:1397.5px;top:131px;width:237.2px;height:32.6px;box-sizing:border-box;border:1px solid #3a3a3a;border-radius:5px;background:linear-gradient(90deg,#1b2029 50%,#2d2d2d 50%);"></div><svg style="left:1447px;top:138.5px" width="18" height="18" viewBox="0 0 18 18" fill="none" stroke="#8a8d93" stroke-width="1.3" stroke-linecap="round"><path d="M1.6 1.6v13.6a1.2 1.2 0 0 0 1.2 1.2h13.6M5.6 13V10.4M9.4 13V3.6M13.2 13V7"/></svg><svg style="left:1564.5px;top:138px" width="19" height="19" viewBox="0 0 19 19" fill="none" stroke="#35b3f1" stroke-width="1.4" stroke-linecap="round" stroke-linejoin="round">
<path d="M14.3 1.8l2.4 2.4L5 15.9a1 1 0 0 1-1.4 0l-1-1a1 1 0 0 1 0-1.4z"/><path d="M11.6 4.6l2.3 2.3"/>
<path d="M3.8 3.2v3M2.3 4.7h3M8 1.4v1.6M7.2 2.2h1.6M14.4 11.6v3M12.9 13.1h3"/></svg><div class="hl" style="left:1384px;top:177px;width:263px"></div><div style="position:absolute;left:1384px;top:195.3px;width:131px;height:39.7px;box-sizing:border-box;background:#25272d;border-bottom:2px solid #35b3f1;border-right:1px solid #33363c;"></div><div class="hl" style="left:1515px;top:235px;width:132px"></div><div style="position:absolute;top:204.00px;line-height:20px;font-size:13px;color:#3bb2f2;white-space:nowrap;font-weight:bold;left:1299.50px;width:300px;text-align:center;">Visual</div><div style="position:absolute;top:205.00px;line-height:20px;font-size:13.4px;color:#86898f;white-space:nowrap;font-weight:bold;left:1431.60px;width:300px;text-align:center;">General</div><div style="position:absolute;left:1401.4px;top:244px;width:228.5px;height:35px;box-sizing:border-box;background:#2d2d2d;border:1px solid #3c3c3c;border-radius:5px;"></div><div style="position:absolute;top:251.80px;line-height:20px;font-size:12px;color:#a9a9a9;white-space:nowrap;left:1414.30px;">Search...</div><div class="hl" style="left:1384px;top:287px;width:263px"></div><div class="hl" style="left:1384px;top:291px;width:248px"></div><svg style="left:1635px;top:293.4px" width="9" height="7" viewBox="0 0 9 7"><path d="M0.2 6.6L4.5 0.4L8.8 6.6z" fill="#b9a8a8"/></svg><div style="position:absolute;left:1635.2px;top:442.8px;width:8.8px;height:361px;box-sizing:border-box;background:#b9a8a8;border-radius:4.4px;"></div><svg style="left:1635px;top:889.6px" width="9" height="7" viewBox="0 0 9 7"><path d="M0.2 0.4L4.5 6.4L8.8 0.4z" fill="#b9a8a8"/></svg><svg style="left:1395.4px;top:311px" width="12" height="10" viewBox="0 0 12 10" fill="none" stroke="#b5b5b5" stroke-width="1.4" stroke-linecap="round" stroke-linejoin="round"><path d="M1.4 2L6 6.8 10.6 2"/></svg><div style="position:absolute;top:305.80px;line-height:20px;font-size:13.3px;color:#eeeeee;white-space:nowrap;font-weight:bold;left:1418.00px;">Trend Line</div><div class="tg on" style="left:1594px;top:307px"><i></i></div><div style="position:absolute;left:1393.2px;top:339.3px;width:230.5px;height:352px;box-sizing:border-box;background:#262b36;border:1px solid #393b40;border-radius:6px;"></div><div style="position:absolute;top:357.80px;line-height:20px;font-size:12.4px;color:#b3b6bb;white-space:nowrap;left:1402.20px;">Type</div><div class="inp" style="left:1501.4px;top:353.3px;width:112.2px;height:28.4px"></div><div style="position:absolute;top:357.90px;line-height:20px;font-size:12.7px;color:#f0f0f0;white-space:nowrap;left:1514.50px;">Linear</div><svg style="left:1594.5px;top:362.7px" width="14" height="10" viewBox="0 0 14 10" fill="none" stroke="#f2f2f2" stroke-width="1.9" stroke-linecap="round" stroke-linejoin="round"><path d="M1.6 2L7 7.4 12.4 2"/></svg><div style="position:absolute;top:404.60px;line-height:20px;font-size:13px;color:#b3b6bb;white-space:nowrap;left:1402.20px;">Color</div><div style="position:absolute;left:1501.8px;top:402px;width:17.5px;height:23.2px;box-sizing:border-box;background:#efefef;border-radius:3px;"></div><div style="position:absolute;left:1505.8px;top:407.8px;width:9.6px;height:12.4px;box-sizing:border-box;background:#ff0000;"></div><div class="inp" style="left:1528.4px;top:399.4px;width:85.3px;height:29px"></div><div style="position:absolute;top:404.60px;line-height:20px;font-size:12.35px;color:#f0f0f0;white-space:nowrap;left:1537.00px;">#FF0000</div><div style="position:absolute;top:451.40px;line-height:20px;font-size:12.5px;color:#b3b6bb;white-space:nowrap;left:1402.20px;">Transparency</div><div class="inp" style="left:1501.4px;top:446.4px;width:94.4px;height:29px"></div><div style="position:absolute;left:1576.5000000000002px;top:448.4px;width:1px;height:25px;box-sizing:border-box;background:#34373d;"></div><div style="position:absolute;left:1576.5000000000002px;top:460.4px;width:18px;height:1px;box-sizing:border-box;background:#34373d;"></div><svg style="left:1581.2000000000003px;top:451.0px" width="10" height="8" viewBox="0 0 10 8"><path d="M0.2 7.6L5 0.6L9.8 7.6z" fill="#9aa0ad"/></svg><svg style="left:1581.2000000000003px;top:463.4px" width="10" height="8" viewBox="0 0 10 8"><path d="M0.2 0.4L5 7.4L9.8 0.4z" fill="#555a66"/></svg><div style="position:absolute;top:451.30px;line-height:20px;font-size:12.9px;color:#f0f0f0;white-space:nowrap;right:346.00px;text-align:right;">0</div><div style="position:absolute;top:451.60px;line-height:20px;font-size:11.8px;color:#b3b6bb;white-space:nowrap;left:1604.80px;">%</div><div style="position:absolute;top:497.50px;line-height:20px;font-size:12.55px;color:#b3b6bb;white-space:nowrap;left:1402.20px;">Line style</div><div class="inp" style="left:1501.4px;top:493.3px;width:112.2px;height:28.4px"></div><div style="position:absolute;top:497.90px;line-height:20px;font-size:12.7px;color:#f0f0f0;white-space:nowrap;left:1514.50px;">Solid</div><svg style="left:1594.5px;top:502.7px" width="14" height="10" viewBox="0 0 14 10" fill="none" stroke="#f2f2f2" stroke-width="1.9" stroke-linecap="round" stroke-linejoin="round"><path d="M1.6 2L7 7.4 12.4 2"/></svg><div style="position:absolute;top:544.30px;line-height:20px;font-size:13.05px;color:#b3b6bb;white-space:nowrap;left:1402.20px;">Line Width</div><div class="inp" style="left:1501.4px;top:539.4px;width:92px;height:29px"></div><div style="position:absolute;left:1574.1000000000001px;top:541.4px;width:1px;height:25px;box-sizing:border-box;background:#34373d;"></div><div style="position:absolute;left:1574.1000000000001px;top:553.4px;width:18px;height:1px;box-sizing:border-box;background:#34373d;"></div><svg style="left:1578.8000000000002px;top:544.0px" width="10" height="8" viewBox="0 0 10 8"><path d="M0.2 7.6L5 0.6L9.8 7.6z" fill="#555a66"/></svg><svg style="left:1578.8000000000002px;top:556.4px" width="10" height="8" viewBox="0 0 10 8"><path d="M0.2 0.4L5 7.4L9.8 0.4z" fill="#9aa0ad"/></svg><div style="position:absolute;top:544.30px;line-height:20px;font-size:12.9px;color:#f0f0f0;white-space:nowrap;right:348.40px;text-align:right;">10</div><div style="position:absolute;top:544.60px;line-height:20px;font-size:11.8px;color:#b3b6bb;white-space:nowrap;left:1602.00px;">px</div><div style="position:absolute;top:586.70px;line-height:20px;font-size:12.7px;color:#b3b6bb;white-space:nowrap;left:1402.20px;">Combine series</div><div class="tg on" style="left:1584.6px;top:587.2px"><i></i></div><div style="position:absolute;top:622.80px;line-height:20px;font-size:13px;color:#b3b6bb;white-space:nowrap;left:1402.20px;">Show equation</div><div class="tg on" style="left:1584.6px;top:623.8px"><i></i></div><div style="position:absolute;top:659.50px;line-height:20px;font-size:12.6px;color:#b3b6bb;white-space:nowrap;left:1402.20px;">Show R<span style="font-size:8px;position:relative;top:-5px">2</span> value</div><div class="tg on" style="left:1584.6px;top:660.4px"><i></i></div><div class="hl" style="left:1384px;top:701px;width:248px"></div><div class="hl" style="left:1384px;top:748px;width:248px"></div><div class="hl" style="left:1384px;top:796px;width:248px"></div><div class="hl" style="left:1384px;top:844px;width:248px"></div><div class="hl" style="left:1384px;top:892px;width:248px"></div><svg style="left:1396.4px;top:719.4px" width="10" height="12" viewBox="0 0 10 12" fill="none" stroke="#b5b5b5" stroke-width="1.4" stroke-linecap="round" stroke-linejoin="round"><path d="M2.6 1.6L7.2 6 2.6 10.4"/></svg><div style="position:absolute;top:715.40px;line-height:20px;font-size:13.25px;color:#eeeeee;white-space:nowrap;font-weight:bold;left:1417.60px;">Ribbons</div><div class="tg off" style="left:1594px;top:716.0px"><i></i></div><svg style="left:1396.4px;top:767.5px" width="10" height="12" viewBox="0 0 10 12" fill="none" stroke="#b5b5b5" stroke-width="1.4" stroke-linecap="round" stroke-linejoin="round"><path d="M2.6 1.6L7.2 6 2.6 10.4"/></svg><div style="position:absolute;top:763.50px;line-height:20px;font-size:12.5px;color:#eeeeee;white-space:nowrap;font-weight:bold;left:1417.60px;">Lines</div><svg style="left:1396.4px;top:815.5px" width="10" height="12" viewBox="0 0 10 12" fill="none" stroke="#b5b5b5" stroke-width="1.4" stroke-linecap="round" stroke-linejoin="round"><path d="M2.6 1.6L7.2 6 2.6 10.4"/></svg><div style="position:absolute;top:811.50px;line-height:20px;font-size:13.4px;color:#eeeeee;white-space:nowrap;font-weight:bold;left:1417.60px;">Shade area</div><div class="tg off" style="left:1594px;top:812.1px"><i></i></div><svg style="left:1396.4px;top:863.5px" width="10" height="12" viewBox="0 0 10 12" fill="none" stroke="#b5b5b5" stroke-width="1.4" stroke-linecap="round" stroke-linejoin="round"><path d="M2.6 1.6L7.2 6 2.6 10.4"/></svg><div style="position:absolute;top:859.50px;line-height:20px;font-size:13.7px;color:#eeeeee;white-space:nowrap;font-weight:bold;left:1417.60px;">Markers</div><div class="tg off" style="left:1594px;top:860.1px"><i></i></div><div class="hl" style="left:1384px;top:902px;width:263px"></div><div style="position:absolute;left:1401px;top:920px;width:229px;height:44px;box-sizing:border-box;border:1px solid #3a3a3a;border-radius:6px;"></div><svg style="left:1451.5px;top:933.5px" width="17" height="17" viewBox="0 0 17 17" fill="none" stroke="#9a9da3" stroke-width="1.4" stroke-linecap="round" stroke-linejoin="round"><path d="M3 4.8A6.3 6.3 0 1 1 2.3 8.6"/><path d="M2.6 1.8v3.3h3.3"/></svg><div style="position:absolute;top:932.60px;line-height:20px;font-size:13.7px;color:#9a9da3;white-space:nowrap;font-weight:bold;left:1476.80px;">Reset to default</div><div style="position:absolute;top:81.20px;line-height:20px;font-size:16.9px;color:#f2f2f2;white-space:nowrap;font-weight:bold;left:1665.00px;">Data</div><svg style="left:1880.5px;top:84px" width="10" height="12" viewBox="0 0 10 12" fill="none" stroke="#9a9a9a" stroke-width="1.4" stroke-linecap="round" stroke-linejoin="round"><path d="M2.6 1.4L7.4 6 2.6 10.6"/></svg><div class="hl" style="left:1650px;top:117px;width:263px"></div><div style="position:absolute;left:1663.4px;top:131.4px;width:236.4px;height:33.3px;box-sizing:border-box;background:#2d2d2d;border:1px solid #3a3a3a;border-radius:5px;"></div><svg style="left:1677px;top:140.5px" width="16" height="16" viewBox="0 0 16 16" fill="none" stroke="#9a9a9a" stroke-width="1.3" stroke-linecap="round"><circle cx="7.2" cy="7.2" r="5.4"/><path d="M11.2 11.2l3.2 3.2"/></svg><div style="position:absolute;top:138.30px;line-height:20px;font-size:12.45px;color:#a9a9a9;white-space:nowrap;left:1706.80px;">Search columns...</div><div class="hl" style="left:1650px;top:178px;width:263px"></div><svg style="left:1665px;top:202.6px" width="12" height="10" viewBox="0 0 12 10" fill="none" stroke="#9a9a9a" stroke-width="1.4" stroke-linecap="round" stroke-linejoin="round"><path d="M1.4 2.2L6 6.8 10.6 2.2"/></svg><svg style="left:1686px;top:197px" width="16" height="19" viewBox="0 0 16 19" fill="none" stroke="#3bb2f2" stroke-width="1.4" stroke-linejoin="round" stroke-linecap="round">
<path d="M2.6 1.4h6.8l4.8 4.8v10a1.4 1.4 0 0 1-1.4 1.4H2.6a1.4 1.4 0 0 1-1.4-1.4V2.8a1.4 1.4 0 0 1 1.4-1.4z"/><path d="M9.2 1.6v4.8h4.8"/><path d="M4.4 10.4h2M8.6 10.4h3M4.4 13.6h2M8.6 13.6h3" stroke-width="1.6"/></svg><div style="position:absolute;top:197.50px;line-height:20px;font-size:12.7px;color:#cfd1d4;white-space:nowrap;font-weight:bold;left:1709.30px;">1. Input (DumboData....</div><div style="position:absolute;top:188.80px;line-height:20px;font-size:11.4px;color:#9a9da3;white-space:nowrap;left:1858.90px;">(10</div><div style="position:absolute;top:206.90px;line-height:20px;font-size:11.3px;color:#9a9da3;white-space:nowrap;left:1858.90px;">cols)</div><div style="position:absolute;left:1650px;top:236px;width:263px;height:360px;overflow:hidden"><div style="position:absolute;left:38.4px;top:14.4px;width:14.4px;height:14.4px;border:2px solid #dedede;border-radius:3px"></div><div style="position:absolute;left:89.2px;top:12.1px;line-height:20px;font-size:12.25px;font-weight:bold;color:#b9bbbf;white-space:nowrap">RecordID</div><div style="position:absolute;left:25.2px;top:43.0px;width:222.8px;height:42.6px;background:#1c2747;border-radius:9px"></div><div style="position:absolute;left:38.4px;top:57.6px;width:14.4px;height:14.4px;background:#eeeeee;border-radius:2px"></div><svg style="left:38.4px;top:57.6px" width="14.4" height="14.4" viewBox="0 0 14.4 14.4" fill="none" stroke="#1c2029" stroke-width="1.7" stroke-linecap="round" stroke-linejoin="round"><path d="M3 7.4l2.9 2.9L11.4 4.4"/></svg><div style="position:absolute;left:89.2px;top:55.3px;line-height:20px;font-size:12.7px;font-weight:bold;color:#7db6ff;white-space:nowrap">Date</div><div style="position:absolute;left:38.4px;top:100.8px;width:14.4px;height:14.4px;border:2px solid #dedede;border-radius:3px"></div><div style="position:absolute;left:89.2px;top:98.5px;line-height:20px;font-size:12.5px;font-weight:bold;color:#b9bbbf;white-space:nowrap">Category</div><div style="position:absolute;left:38.4px;top:144.0px;width:14.4px;height:14.4px;border:2px solid #dedede;border-radius:3px"></div><div style="position:absolute;left:89.2px;top:141.7px;line-height:20px;font-size:12.45px;font-weight:bold;color:#b9bbbf;white-space:nowrap">Subcategory</div><div style="position:absolute;left:25.2px;top:172.6px;width:222.8px;height:42.6px;background:#1c2747;border-radius:9px"></div><div style="position:absolute;left:38.4px;top:187.2px;width:14.4px;height:14.4px;background:#eeeeee;border-radius:2px"></div><svg style="left:38.4px;top:187.2px" width="14.4" height="14.4" viewBox="0 0 14.4 14.4" fill="none" stroke="#1c2029" stroke-width="1.7" stroke-linecap="round" stroke-linejoin="round"><path d="M3 7.4l2.9 2.9L11.4 4.4"/></svg><div style="position:absolute;left:89.2px;top:184.9px;line-height:20px;font-size:12.85px;font-weight:bold;color:#7db6ff;white-space:nowrap">Amount</div><div style="position:absolute;left:38.4px;top:230.4px;width:14.4px;height:14.4px;border:2px solid #dedede;border-radius:3px"></div><div style="position:absolute;left:89.2px;top:228.1px;line-height:20px;font-size:12.1px;font-weight:bold;color:#b9bbbf;white-space:nowrap">Currency</div><div style="position:absolute;left:25.2px;top:259.0px;width:222.8px;height:42.6px;background:#1c2747;border-radius:9px"></div><div style="position:absolute;left:38.4px;top:273.6px;width:14.4px;height:14.4px;background:#eeeeee;border-radius:2px"></div><svg style="left:38.4px;top:273.6px" width="14.4" height="14.4" viewBox="0 0 14.4 14.4" fill="none" stroke="#1c2029" stroke-width="1.7" stroke-linecap="round" stroke-linejoin="round"><path d="M3 7.4l2.9 2.9L11.4 4.4"/></svg><div style="position:absolute;left:89.2px;top:271.3px;line-height:20px;font-size:11.95px;font-weight:bold;color:#7db6ff;white-space:nowrap">Status</div><div style="position:absolute;left:38.4px;top:316.8px;width:14.4px;height:14.4px;border:2px solid #dedede;border-radius:3px"></div><div style="position:absolute;left:89.2px;top:314.5px;line-height:20px;font-size:12.6px;font-weight:bold;color:#b9bbbf;white-space:nowrap">Owner</div><div style="position:absolute;left:38.4px;top:359.0px;width:14.4px;height:14.4px;border:2px solid #dedede;border-radius:3px"></div></div><div class="hl" style="left:1650px;top:604px;width:263px"></div><svg style="left:1901px;top:241.6px" width="9" height="7" viewBox="0 0 9 7"><path d="M0.2 6.6L4.5 0.4L8.8 6.6z" fill="#b9a8a8"/></svg><div style="position:absolute;left:1901px;top:254px;width:9px;height:270px;box-sizing:border-box;background:#b9a8a8;border-radius:4.5px;"></div><svg style="left:1901px;top:583.4px" width="9" height="7" viewBox="0 0 9 7"><path d="M0.2 0.4L4.5 6.4L8.8 0.4z" fill="#b9a8a8"/></svg>
</div>
</body></html>
